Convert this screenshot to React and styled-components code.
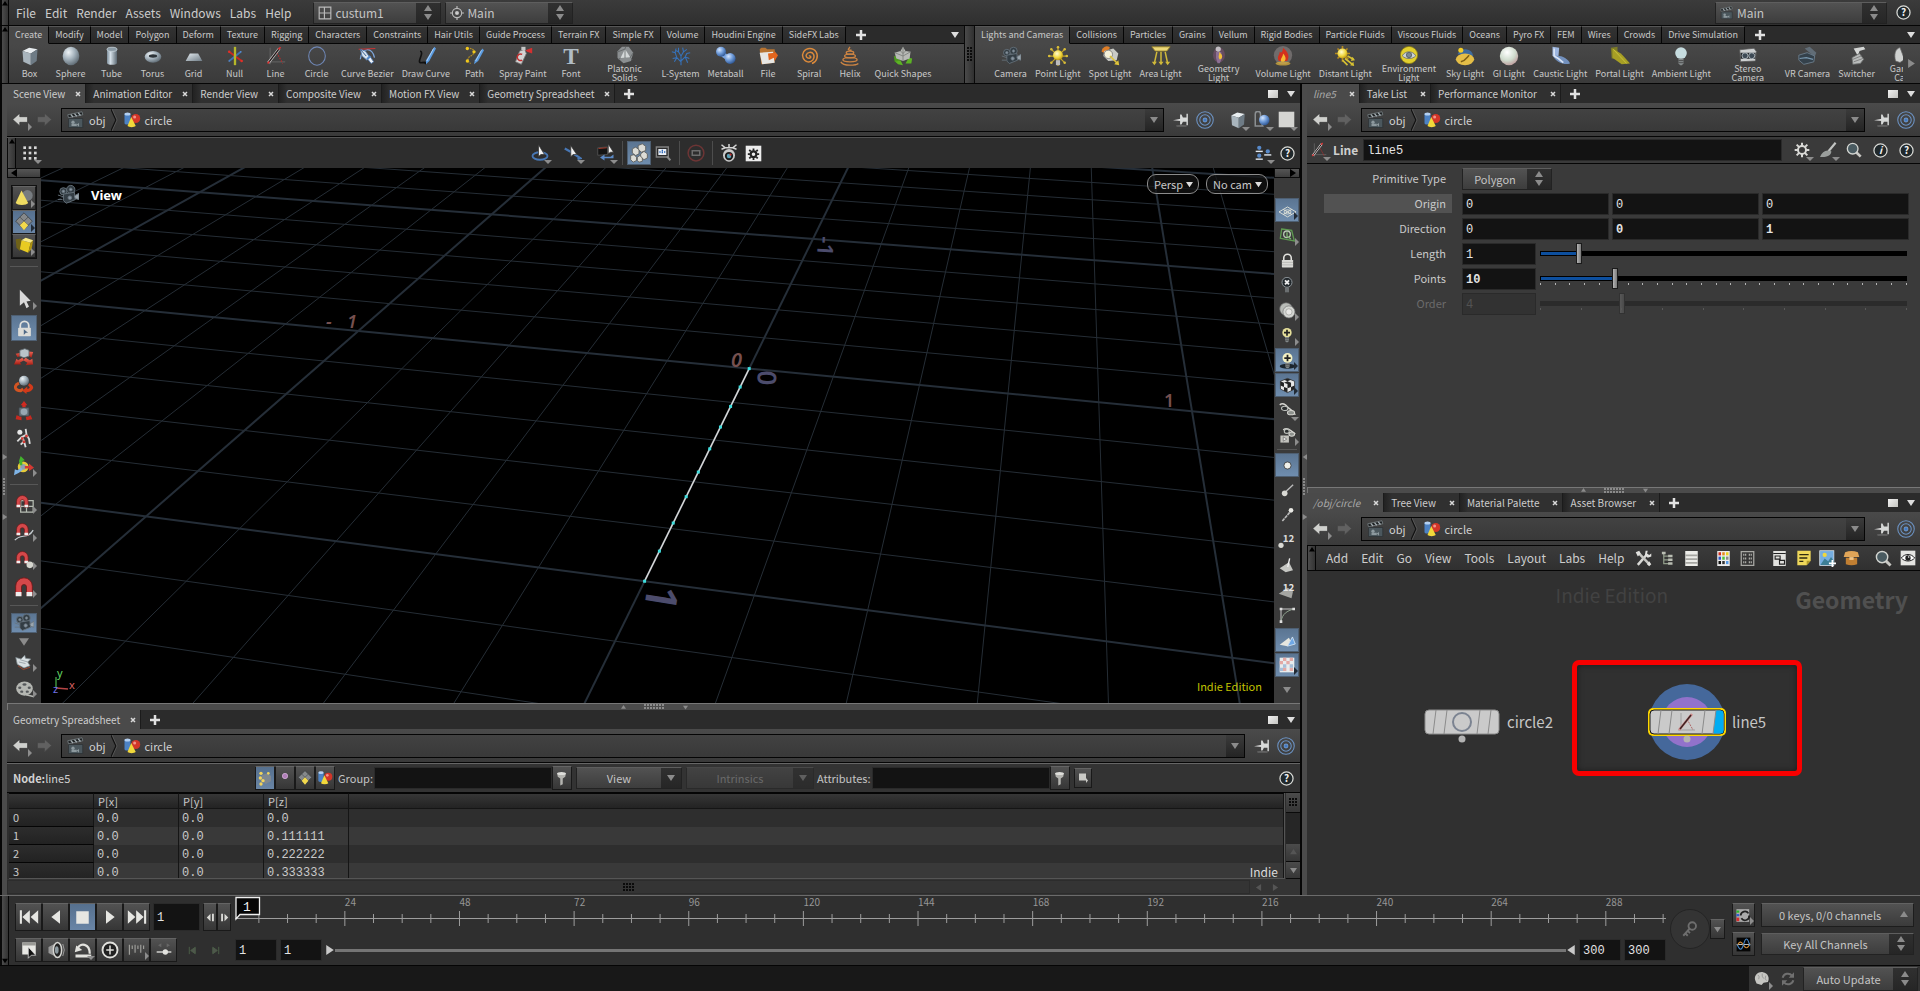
// App.jsx
import React from "react";
import styled, { createGlobalStyle, css } from "styled-components";

const sans = `"Noto Sans CJK SC", "Noto Sans", sans-serif`;
const mono = `"Liberation Mono", "DejaVu Sans Mono", monospace`;

const GlobalStyle = createGlobalStyle`
  * { box-sizing: border-box; }
  body {
    margin: 0;
    background: #181818;
    color: #c4c4c4;
    font-family: ${sans};
    font-size: 11px;
    line-height: 16px;
  }
  button, input, select {
    font: inherit;
    color: inherit;
    margin: 0;
    padding: 0;
    border: none;
    border-radius: 0;
    background: none;
  }
  svg { display: block; flex: none; }
`;

/* ---------- icons ---------- */

const Defs = styled.svg`
  position: absolute;
  width: 0;
  height: 0;
`;

const Gradients = () => (
  <Defs aria-hidden="true">
    <defs>
      <linearGradient id="steel" x1="0" y1="0" x2="1" y2="1">
        <stop offset="0" stopColor="#e4ebf0" />
        <stop offset="1" stopColor="#6f7c86" />
      </linearGradient>
      <linearGradient id="tube" x1="0" x2="1">
        <stop offset="0" stopColor="#7d8e9b" />
        <stop offset="0.35" stopColor="#d5e0e8" />
        <stop offset="1" stopColor="#5b6872" />
      </linearGradient>
      <radialGradient id="ball" cx="0.35" cy="0.3" r="0.75">
        <stop offset="0" stopColor="#eef3f6" />
        <stop offset="0.5" stopColor="#a5b3bd" />
        <stop offset="1" stopColor="#5d6972" />
      </radialGradient>
      <radialGradient id="blue" cx="0.35" cy="0.3" r="0.75">
        <stop offset="0" stopColor="#d5e6ff" />
        <stop offset="0.5" stopColor="#6f9bd8" />
        <stop offset="1" stopColor="#2b5390" />
      </radialGradient>
      <radialGradient id="gold" cx="0.4" cy="0.35" r="0.7">
        <stop offset="0" stopColor="#fffbd0" />
        <stop offset="0.6" stopColor="#efd53a" />
        <stop offset="1" stopColor="#b48c12" />
      </radialGradient>
      <radialGradient id="pearl" cx="0.4" cy="0.3" r="0.8">
        <stop offset="0" stopColor="#ffffff" />
        <stop offset="0.55" stopColor="#cfdccd" />
        <stop offset="1" stopColor="#b98d92" />
      </radialGradient>
      <linearGradient id="red" x1="0" y1="0" x2="0" y2="1">
        <stop offset="0" stopColor="#f06a5a" />
        <stop offset="1" stopColor="#a51c12" />
      </linearGradient>
    </defs>
  </Defs>
);

const magnet = (
  <path d="M3 17 V10 a7 7 0 0 1 14 0 V17 H12.500 V10.500 a2.500 2.500 0 0 0 -5 0 V17Z" fill="#d5484a" stroke="#701616" strokeWidth="0.800" />
);

const bulb = (fill) => (
  <>
    <circle cx="12" cy="8.500" r="7" fill={fill} />
    <path d="M9 15 h6 v6 l-2 2 h-2 l-2-2Z" fill="#83898a" />
    <path d="M9 17.500 h6 M9 20 h6" stroke="#444" />
  </>
);

const padlock = (
  <>
    <path d="M6 12 V8 a6 6 0 0 1 12 0 V12" fill="none" stroke="#e2e2de" strokeWidth="2.500" />
    <rect x="3" y="11" width="18" height="12" rx="1" fill="#dcdcd8" />
  </>
);

const art = {
  box: (
    <>
      <path d="M3 6 L11 2 L21 4 L13 9Z" fill="#e8edf0" />
      <path d="M3 6 L13 9 V23 L4 19Z" fill="#a9b5bd" />
      <path d="M13 9 L21 4 L20 18 L13 23Z" fill="#6e7b85" />
    </>
  ),
  sphere: <ellipse cx="12" cy="12" rx="10" ry="11" fill="url(#ball)" />,
  tube: (
    <>
      <path d="M6 4 V20 a6 2.500 0 0 0 12 0 V4Z" fill="url(#tube)" />
      <ellipse cx="12" cy="4" rx="6" ry="2.500" fill="#8b9aa5" stroke="#c6d2da" />
    </>
  ),
  torus: (
    <>
      <ellipse cx="12" cy="13" rx="10" ry="7" fill="url(#ball)" />
      <ellipse cx="12" cy="12" rx="5" ry="2" fill="#2c3338" />
    </>
  ),
  grid: <path d="M7 9 H17 L22 18 H2Z" fill="url(#steel)" />,
  nullo: (
    <g strokeWidth="2.200">
      <path d="M5 7 L12 12" stroke="#c92822" />
      <path d="M12 12 L20 18" stroke="#c92822" />
      <path d="M19 7 L5 18" stroke="#3d72b5" />
      <path d="M12 1 V23" stroke="#b5b72a" strokeWidth="2.800" />
      <circle cx="5" cy="7" r="1.500" fill="#e03028" />
      <circle cx="20" cy="18" r="1.500" fill="#e03028" />
      <circle cx="19" cy="7" r="1" fill="#5b90d5" />
      <circle cx="5" cy="18" r="1" fill="#5b90d5" />
    </g>
  ),
  line: (
    <>
      <path d="M5 2 V22 M1 19 H23" stroke="#5d5d5d" strokeWidth="1.500" />
      <path d="M13 8 L20 21" stroke="#b52c2c" strokeWidth="1.300" strokeDasharray="2 1.500" />
      <path d="M3 20 L16 3" stroke="#ccc" strokeWidth="3.200" />
      <path d="M3 20 L16 3" stroke="#1f1515" strokeWidth="1.500" />
      <path d="M15 4 l2.500 -2.500 M2 21 l2 -2.500" stroke="#d33" strokeWidth="2" />
    </>
  ),
  circle: <ellipse cx="12" cy="12" rx="10" ry="11" fill="none" stroke="#6e86b4" strokeWidth="1.300" />,
  bezier: (
    <>
      <path d="M4 16 C5 1 19 1 21 14" fill="none" stroke="#7ea7dd" strokeWidth="1.500" />
      <path d="M2 4 L22 3" stroke="#c33" strokeWidth="1.300" />
      <path d="M4 4 L10 6 L15 13 L12 17 L6 12Z" fill="#d9e4ef" stroke="#4b74ab" />
      <path d="M4 4 L11 12" stroke="#3a5f92" strokeWidth="1.200" />
      <path d="M13 16 L17 21 L20 19 L16 13Z" fill="#eef3f8" stroke="#4b74ab" />
      <path d="M12 16 L16 12" stroke="#5588c8" strokeWidth="2.500" />
    </>
  ),
  drawcurve: (
    <>
      <path d="M5 6 C11 8 -1 21 7 20 S9 21 12 21" fill="none" stroke="#101010" strokeWidth="2" />
      <path d="M22 1 L24 3 L16 18 L12 22 L12 17Z" fill="#5a9be0" />
      <path d="M21 3 L13 18" stroke="#b5d5f8" strokeWidth="1.200" />
    </>
  ),
  path: (
    <>
      <path d="M4 3 C15 2 13 10 8 12 S5 20 8 21" fill="none" stroke="#b08c25" strokeWidth="1.500" strokeDasharray="2 1" />
      <path d="M22 3 L24 5 L17 18 L12 22 L13 17Z" fill="#5a9be0" />
      <path d="M21 5 L14 18" stroke="#b5d5f8" />
      <circle cx="4" cy="3" r="2" fill="#f1c81c" />
      <circle cx="12" cy="7" r="2" fill="#f1c81c" />
      <circle cx="4" cy="18" r="2" fill="#f1c81c" />
    </>
  ),
  spray: (
    <>
      <path d="M8 6 L14 4 L16 9 L10 22 L3 19Z" fill="#d3d3d3" stroke="#777" />
      <path d="M10 1 h5 v4 h-5Z" fill="#c5c5c5" />
      <path d="M15 5 L23 2 V9 L17 7Z" fill="#d43030" />
      <path d="M11 10 a4 4 0 1 0 0 7" fill="none" stroke="#c23030" strokeWidth="1.800" />
    </>
  ),
  font: (
    <text x="12" y="21" textAnchor="middle" fontFamily="Liberation Serif" fontWeight="700" fontSize="28" fill="#b0bcc5">T</text>
  ),
  platonic: (
    <>
      <path d="M8 1 H17 L23 9 L20 20 L10 23 L2 16 L2 7Z" fill="#8b8f91" />
      <path d="M12 4 L19 15 L6 16Z" fill="#d4d8d9" />
      <path d="M12 4 L13 1 M19 15 L22 18 M6 16 L3 18 M19 15 L23 9 M12 4 L2 8 M12 4 L12 16" stroke="#5c6062" />
    </>
  ),
  lsystem: (
    <path
      d="M12 23 V11 M12 19 L7 14 L2 15 M7 14 L5 8 L1 7 M5 8 L6 3 M12 12 L9 7 L9 2 M9 7 L5 5 M12 12 L15 7 L14 2 M15 7 L19 4 M12 18 L17 13 L22 15 M17 13 L19 9 L23 8 M7 14 L4 19 M17 13 L20 20"
      fill="none" stroke="#3672ba" strokeWidth="1.300"
    />
  ),
  metaball: (
    <>
      <path d="M8 10 L17 16" stroke="#7ba4de" strokeWidth="6" />
      <circle cx="6" cy="7" r="6" fill="url(#blue)" />
      <circle cx="17" cy="15" r="6.500" fill="url(#blue)" />
    </>
  ),
  file: (
    <>
      <path d="M2 4 L4 2 H9 L11 4 H20 V20 L4 22Z" fill="#b87431" />
      <path d="M2 8 L18 7 L20 20 L5 22Z" fill="#e7e7e4" />
      <path d="M12 9 L20 8 L19 5 L24 11 L20 18 L19 14 L13 17Z" fill="#e2651d" />
    </>
  ),
  spiral: (
    <path
      d="M12 12 a1.500 1.500 0 0 1 2 2 a3.500 3.500 0 0 1 -5.500 -3 a5 5 0 0 1 9 -1 a6.500 6.500 0 0 1 -7 9 a8 8 0 0 1 -5 -12 a9 9 0 0 1 15 0 a9.500 9.500 0 0 1 -5 14"
      fill="none" stroke="#dc8a3b" strokeWidth="1.700"
    />
  ),
  helix: (
    <g fill="none" stroke="#cc8443" strokeWidth="1.600">
      <path d="M12 1 L10 4 a3 1 0 0 0 4 1" />
      <ellipse cx="12" cy="8" rx="4.500" ry="1.800" />
      <ellipse cx="12" cy="12" rx="6.500" ry="2.200" />
      <ellipse cx="12" cy="16.500" rx="8.500" ry="2.500" />
      <path d="M1 19 C4 25 20 23 22 21" />
    </g>
  ),
  quick: (
    <>
      <path d="M1 12 L6 13 L10 22 L2 19Z" fill="#4d9a1e" />
      <path d="M3 19 L9 17 L12 23 L6 22Z M15 21 L19 14 L23 15 L22 21Z" fill="#5cb324" />
      <path d="M12 1 L15 6 L21 7 L20 15 L12 18 L4 15 L2 8 L9 6Z" fill="#b7b9b5" />
      <path d="M12 1 V18 M2 8 L12 12 L21 7 M9 6 L12 9 L15 6" stroke="#7b7d79" fill="none" />
    </>
  ),
  camera: (
    <g fill="#333d44" stroke="#68747d">
      <circle cx="7" cy="8" r="4" />
      <circle cx="15" cy="6" r="4.500" />
      <path d="M7 11 L19 9 L20 17 L10 21 L7 18Z" />
      <path d="M19 13 L24 10 V17 L20 16Z" fill="#9aa5ad" />
      <circle cx="7" cy="8" r="1.500" fill="#8794a0" />
      <circle cx="15" cy="6" r="1.500" fill="#8794a0" />
      <circle cx="14" cy="15" r="2" fill="#8794a0" />
      <path d="M1 12 L7 14 M1 17 h5" />
    </g>
  ),
  point: (
    <>
      <path d="M12 0 V24 M0 12 H24 M3.500 3.500 L20.500 20.500 M20.500 3.500 L3.500 20.500" stroke="#c2a52b" strokeWidth="1.500" />
      <g fill="#d8bc38">
        <circle cx="12" cy="1.500" r="1.500" />
        <circle cx="1.500" cy="12" r="1.500" />
        <circle cx="22.500" cy="12" r="1.500" />
        <circle cx="4" cy="4" r="1.500" />
        <circle cx="20" cy="4" r="1.500" />
        <circle cx="4" cy="20" r="1.500" />
        <circle cx="20" cy="20" r="1.500" />
      </g>
      <circle cx="12" cy="11" r="6" fill="url(#gold)" />
      <path d="M9.500 17 h5 v6 h-5Z" fill="#bbb" />
    </>
  ),
  spot: (
    <>
      <path d="M2 7 a6 6 0 0 1 10 -5 L7 9Z" fill="#dd7d27" />
      <path d="M5 6 L16 3 L22 9 L20 17 L10 18 L4 12Z" fill="#c9cac5" />
      <circle cx="10" cy="10" r="5" fill="#f4f0d8" stroke="#777" />
      <path d="M12 12 L21 21" stroke="#e0c43a" strokeWidth="2" />
      <path d="M23 23 l-6 -1 l5 -5Z" fill="#e0c43a" />
    </>
  ),
  area: (
    <>
      <path d="M1 1 H23 L19 6 H5Z" fill="#ecd878" stroke="#9b8425" />
      <path d="M7 7 L4 21 M12 7 V21 M17 7 L20 21" stroke="#d0b93a" strokeWidth="1.800" />
      <path d="M1 19 h6 l-3 4Z M9 19 h6 l-3 4Z M17 19 h6 l-3 4Z" fill="#d0b93a" />
    </>
  ),
  geolight: (
    <>
      <ellipse cx="12" cy="12" rx="8" ry="10" fill="#6d4d66" opacity="0.800" />
      <circle cx="11" cy="4" r="3.500" fill="#c3bfc4" />
      <path d="M8 8 h7 l1 8 l-3 7 h-3 l-2 -7Z" fill="#8c6f93" />
      <path d="M12 8 C18 12 17 17 13 18 C10 14 13 12 12 8Z" fill="#f0bf38" />
    </>
  ),
  volume: (
    <>
      <circle cx="12" cy="11" r="11" fill="#7a7676" opacity="0.800" />
      <path d="M12 2 C19 8 20 13 17 18 H7 C4 13 8 11 8 7 C10 9 12 7 12 2Z" fill="#d3301d" />
      <path d="M12 9 C16 13 16 17 13 19 H10 C8 15 12 14 12 9Z" fill="#f6b932" />
      <ellipse cx="12" cy="21" rx="9" ry="2.500" fill="#e0b43c" opacity="0.700" />
    </>
  ),
  distant: (
    <>
      <path d="M9 0 V19 M0 9 H18 M3 3 L16 16 M15 3 L3 15" stroke="#b58a1e" strokeWidth="2" />
      <circle cx="9" cy="9" r="6" fill="url(#gold)" />
      <path d="M15 12 L22 16 M12 15 L21 22 M9 17 L15 23" stroke="#d6c032" strokeWidth="2" />
      <path d="M24 17 l-5 1 l2 -5Z M23 24 l-5 -1 l4 -4Z" fill="#d6c032" />
    </>
  ),
  environment: (
    <>
      <circle cx="12" cy="12" r="11.500" fill="#e2cf2f" stroke="#8c7d12" />
      <path d="M3 13 C7 6 17 6 21 13 C17 18 7 18 3 13Z" fill="#c9d0d4" stroke="#5d646a" />
      <circle cx="12" cy="12" r="3.500" fill="#7b8790" stroke="#4a545c" />
    </>
  ),
  sky: (
    <>
      <path d="M3 10 A10 10 0 0 1 22 12Z" fill="#3f6b9d" />
      <circle cx="7" cy="5" r="3" fill="#f2cc28" />
      <ellipse cx="12" cy="16" rx="11" ry="7" fill="#e5be47" />
      <path d="M7 19 C12 18 14 14 17 11" stroke="#7d5e14" strokeWidth="1.800" fill="none" />
    </>
  ),
  gi: <circle cx="12" cy="12" r="11" fill="url(#pearl)" />,
  caustic: (
    <>
      <path d="M3 1 L11 2 L10 14 L3 12Z" fill="#9db6e0" />
      <path d="M4 13 C9 9 22 14 24 21 C18 23 9 21 4 13Z" fill="#7290bd" />
      <path d="M5 3 V12 L10 15 L16 20" stroke="#d9e4f5" strokeWidth="2" fill="none" />
    </>
  ),
  portal: (
    <>
      <path d="M1 2 L9 1 V16 L2 15Z" fill="#7c7b26" />
      <path d="M3 3 L13 9 L16 12 L24 21 L14 22 L3 14Z" fill="#a79f25" />
      <path d="M4 4 L20 21" stroke="#cfc63d" />
    </>
  ),
  ambient: bulb("#c6dcdf"),
  stereo: (
    <>
      <path d="M1 5 L20 3 L23 7 L22 20 L2 21Z" fill="#cdd0d1" stroke="#555" />
      <path d="M2 9 H22 V17 H2Z" fill="#24292c" />
      <circle cx="8" cy="13" r="4" fill="#3d4a55" stroke="#c8d0d6" />
      <circle cx="17" cy="13" r="4" fill="#3d4a55" stroke="#c8d0d6" />
    </>
  ),
  vr: (
    <>
      <path d="M8 3 L14 1 L22 8 L20 13 L14 8Z" fill="#616d77" />
      <path d="M1 11 L11 8 L20 12 L19 19 L7 22 L1 17Z" fill="#34414b" stroke="#6f8292" />
      <path d="M2 15 L10 14 L18 16" stroke="#7897ae" strokeWidth="1.500" fill="none" />
    </>
  ),
  switcher: (
    <>
      <path d="M8 3 L20 1 L22 4 L15 6 L13 12Z" fill="#d5d7d6" />
      <path d="M6 14 L15 9 L20 16 L16 21 L7 22Z" fill="#b9bcbb" stroke="#6c6f6e" />
      <path d="M7 16 L17 12 M8 19 L19 15" stroke="#777" />
    </>
  ),
  gamecam: (
    <path d="M12 2 C5 4 4 12 6 20 L12 22 L18 18Z" fill="#cfd1d0" stroke="#666" />
  ),
  layout: (
    <path d="M2 2 H22 V22 H2Z M11 2 V22 M2 12 H22" fill="none" stroke="#b9b9b9" strokeWidth="2" />
  ),
  target: (
    <g fill="none" stroke="#b9b9b9" strokeWidth="2">
      <circle cx="12" cy="12" r="8" />
      <circle cx="12" cy="12" r="2.500" fill="#ddd" />
      <path d="M12 0 V5 M12 19 V24 M0 12 H5 M19 12 H24" />
    </g>
  ),
  clapper: (
    <>
      <path d="M2 10 H21 V22 H2Z" fill="#4b575d" stroke="#2c3134" />
      <path d="M1 5 L20 1 L21 5 L2 9Z" fill="#1d2022" stroke="#7d868a" />
      <path d="M5 4.500 L8 8 M10 3.500 L13 7 M15 2.500 L18 6" stroke="#a3adb1" strokeWidth="1.800" />
      <circle cx="8" cy="15" r="2.200" fill="#8d999e" />
      <path d="M6 17 H13 V20 H6Z M13 18 L16 16 V21Z" fill="#8d999e" />
    </>
  ),
  shapes: (
    <>
      <path d="M2 4 V16 a4 2 0 0 0 8 0 V4Z" fill="#4c82c4" />
      <ellipse cx="6" cy="4" rx="4" ry="2" fill="#b3d0f2" />
      <circle cx="17" cy="10" r="6" fill="#d23528" />
      <circle cx="15.500" cy="8" r="2" fill="#f29488" />
      <path d="M11 8 L17 20 a6 2.500 0 0 1 -11 0Z" fill="#f1d83b" />
    </>
  ),
  back: (
    <path d="M1 12 L11 3 V8 H22 V16 H11 V21Z" fill="#cfd0cd" stroke="#333" />
  ),
  forward: (
    <path d="M22 12 L12 3 V8 H2 V16 H12 V21Z" fill="#616161" stroke="#444" />
  ),
  pin: (
    <>
      <path d="M0 13 L11 11 V14Z" fill="#ddd" />
      <path d="M10 5 H12 L14 9 H19 V4 H21 V20 H19 V15 H14 L12 19 H10Z" fill="#d7d9d8" />
      <ellipse cx="12" cy="21" rx="8" ry="1.200" fill="#666" />
    </>
  ),
  rings: (
    <g fill="none" stroke="#6c93c4" strokeWidth="1.400">
      <circle cx="12" cy="12" r="11" />
      <circle cx="12" cy="12" r="7" />
      <circle cx="12" cy="12" r="2.500" fill="#3f7ac8" />
    </g>
  ),
  ghost: (
    <>
      <path d="M3 4 a3 3 0 0 1 7 0 V12 L13 20 H3Z" fill="none" stroke="#8b8f92" strokeWidth="2" />
      <circle cx="15" cy="12" r="7" fill="url(#blue)" />
    </>
  ),
  white: <path d="M1 1 H23 V23 H1Z" fill="#d5d5d2" />,
  dots: (
    <g fill="#d6d6d6">
      {[2, 10, 18].map((y) => [2, 10, 18].map((x) => <rect key={`${x}${y}`} x={x} y={y} width="4" height="4" />))}
    </g>
  ),
  selRotate: (
    <>
      <ellipse cx="12" cy="16" rx="10" ry="5" fill="none" stroke="#4877b4" strokeWidth="2.500" />
      <path d="M10 1 L10 17 L13 14 L18 14Z" fill="#f1f1f1" stroke="#333" />
    </>
  ),
  selBrush: (
    <>
      <path d="M1 6 L10 11 L22 19 L18 20" stroke="#4877b4" strokeWidth="3" fill="none" />
      <path d="M9 2 L9 17 L12 14 L17 14Z" fill="#f1f1f1" stroke="#333" />
    </>
  ),
  selMove: (
    <>
      <path d="M1 5 L14 4 V14 L1 15Z" fill="#141414" stroke="#5b5b5b" />
      <path d="M2 6 L13 5" stroke="#a03a2a" strokeWidth="1.500" />
      <path d="M22 14 V19 H10 V22 L4 18 L10 14 V17 H18Z" fill="#5c8ac6" />
      <path d="M15 0 L15 13 L18 11 L22 11Z" fill="#f1f1f1" stroke="#333" />
    </>
  ),
  cubes: (
    <g fill="#dcdcd6" stroke="#5c5c58">
      <path d="M11 3 L16 1 L20 4 V9 L15 11 L11 8Z" />
      <path d="M4 7 L8 5 L12 8 V13 L8 15 L4 12Z" />
      <path d="M14 13 L18 10 L22 13 V18 L18 20 L14 17Z" />
      <path d="M2 15 L6 14 L9 17 V21 L5 23 L2 20Z" />
      <path d="M10 17 L13 15 L16 18 V22 L12 23 L10 21Z" />
    </g>
  ),
  zoombox: (
    <>
      <path d="M2 3 H20 V18 H2Z" fill="none" stroke="#808080" strokeWidth="2" />
      <rect x="5" y="6" width="12" height="9" fill="#e9eef5" />
      <path d="M11 7 v7 M6.500 10.500 h9" stroke="#2d66b5" strokeWidth="2" strokeDasharray="2 1.500" />
      <path d="M18 17 L23 23" stroke="#8b8b8b" strokeWidth="3" />
    </>
  ),
  noentry: (
    <>
      <circle cx="12" cy="12" r="10.500" fill="none" stroke="#6d3535" strokeWidth="2" />
      <rect x="7" y="9" width="10" height="6" fill="none" stroke="#6d6d6d" strokeWidth="2" />
    </>
  ),
  flycam: (
    <>
      <path d="M2 1 L7 5 H17 L22 1 M2 7 L7 5 M22 7 L17 5 M12 0 V6" stroke="#d5d5d5" strokeWidth="2" fill="none" />
      <ellipse cx="12" cy="15" rx="8" ry="8.500" fill="#c9c9c9" />
      <circle cx="12" cy="16" r="5.500" fill="#1b1b1b" />
      <circle cx="12" cy="16" r="3" fill="#5ba3b8" />
      <circle cx="14" cy="14" r="1.500" fill="#c33" />
    </>
  ),
  gearbox: (
    <>
      <rect x="1" y="1" width="22" height="22" fill="#ececec" />
      <circle cx="12" cy="13" r="4" fill="none" stroke="#222" strokeWidth="3" />
      <path d="M12 5 V8 M12 18 V21 M4 13 H7 M17 13 H20 M6 7 L8 9 M16 17 L18 19 M18 7 L16 9 M8 17 L6 19" stroke="#222" strokeWidth="2.500" />
    </>
  ),
  people: (
    <g>
      {[[6, 4], [6, 15], [18, 9]].map(([x, y]) => (
        <g key={`${x}${y}`}>
          <circle cx={x} cy={y} r="3" fill="#5789c9" />
          <path d={`M${x - 5} ${y + 5} h10`} stroke="#dfe6ee" strokeWidth="2" />
        </g>
      ))}
    </g>
  ),
  help: (
    <>
      <circle cx="12" cy="12" r="10.500" fill="#20282b" stroke="#d9dad6" strokeWidth="2" />
      <text x="12" y="18" textAnchor="middle" fontSize="16" fontWeight="700" fill="#f1f1f1">?</text>
    </>
  ),
  info: (
    <>
      <circle cx="12" cy="12" r="10.500" fill="#20282b" stroke="#d9dad6" strokeWidth="2" />
      <text x="12" y="18" textAnchor="middle" fontSize="16" fontStyle="italic" fontWeight="700" fill="#f1f1f1">i</text>
    </>
  ),
  cone: (
    <>
      <circle cx="16" cy="9" r="6.500" fill="#777c80" />
      <path d="M9 3 L17 18 a8 3.500 0 0 1 -15 0Z" fill="#efdc62" />
    </>
  ),
  diamond: (
    <>
      <path d="M12 1 L22 11 L12 21 L2 11Z" fill="#85888a" stroke="#3c4145" />
      <path d="M7 6 L17 16 M17 6 L7 16" stroke="#4a4f53" />
      <path d="M12 11 L17 16 L12 22 L7 16Z" fill="#f2d94c" />
    </>
  ),
  yellowcube: (
    <>
      <path d="M2 4 L9 3 L7 18 L3 14Z" fill="#6f6218" />
      <path d="M9 5 L20 8 L17 20 L7 16Z" fill="#e8cb22" />
      <path d="M9 5 L14 2 L23 5 L20 8Z" fill="#f8ea86" />
      <path d="M20 8 L23 5 L21 16 L17 20Z" fill="#ad920f" />
    </>
  ),
  arrow: <path d="M7 1 L7 20 L12 16 L15 23 L18 21 L15 15 L20 14Z" fill="#dadada" />,
  lock: (
    <>
      {padlock}
      <path d="M11 13 V21 L14 18 H17Z" fill="#4e6886" />
    </>
  ),
  padlock: (
    <>
      {padlock}
      <path d="M3 15 H21 M3 19 H21" stroke="#a9a9a5" />
    </>
  ),
  move: (
    <>
      <path d="M0 21 L3 14 L5 16 L10 13 L12 16 L7 19 L9 21Z" fill="url(#red)" />
      <path d="M23 21 L14 22 L16 19 L11 16 L14 13 L19 16 L22 14Z" fill="url(#red)" />
      <path d="M15 5 L23 6 L21 13 L17 10Z M8 7 L2 8 L4 12 L8 11Z" fill="url(#red)" />
      <path d="M7 4 L13 2 L18 4 V11 L12 13 L7 11Z" fill="#b9c4ca" stroke="#60696e" />
    </>
  ),
  rotate: (
    <>
      <path d="M6 11 C-1 14 1 20 8 20 L11 18" fill="none" stroke="#d35422" strokeWidth="3.500" />
      <path d="M18 11 C26 14 24 21 15 22 L15 24 L10 20 L16 15 V18 C19 17 20 16 17 14Z" fill="#d23a1a" />
      <circle cx="12" cy="8" r="6" fill="url(#ball)" />
    </>
  ),
  scale: (
    <>
      <path d="M12 0 L16 5 H8Z M10 5 h4 v4 h-4Z" fill="#d02a20" />
      <path d="M2 22 L3 17 L9 19 V23Z M22 22 L20 17 L14 19 L15 23Z" fill="#c62a20" />
      <path d="M6 8 L18 8 V18 H6Z" fill="#67737b" stroke="#3e464b" />
      <circle cx="12" cy="13" r="4" fill="#97a7b2" />
    </>
  ),
  pose: (
    <>
      <circle cx="7" cy="5" r="3" fill="#e6e6e6" />
      <path d="M14 1 L15 8 L9 11 L4 16 M15 8 L18 13 L19 19 M10 11 L12 16 L14 23 M12 16 L8 20" stroke="#d9d9d9" strokeWidth="2.200" fill="none" />
      <path d="M15 8 v3 M10 11 v3 M12 15 v3" stroke="#d43a33" strokeWidth="3" />
    </>
  ),
  handles: (
    <>
      <circle cx="11" cy="13" r="5" fill="#8fa0b4" stroke="#e6cb39" strokeWidth="3" />
      <path d="M8 0 L13 5 L10 6 V11 H7 L6 6Z" fill="#43b32d" />
      <path d="M13 12 H18 V9 L24 14 L18 18 V15 H13Z" fill="#d43a33" />
      <path d="M0 23 L1 16 L4 17 L9 14 L10 17 L6 20Z" fill="#7fb4e6" />
    </>
  ),
  magnetGrid: (
    <>
      <path d="M8 9 H23 V23 H8Z M15 9 V23 M8 16 H23" fill="none" stroke="#b6bcb2" strokeWidth="1.500" />
      {magnet}
      <path d="M3 14 h4.500 v3 H3Z M12.500 14 h4.500 v3 h-4.500Z" fill="#eee" />
    </>
  ),
  magnetCurve: (
    <>
      <path d="M1 23 C8 15 17 22 23 11" fill="none" stroke="#c5ccd0" strokeWidth="1.500" />
      {magnet}
      <path d="M3 14 h4.500 v3 H3Z M12.500 14 h4.500 v3 h-4.500Z" fill="#eee" />
    </>
  ),
  magnetPoint: (
    <>
      {magnet}
      <path d="M3 14 h4.500 v3 H3Z M12.500 14 h4.500 v3 h-4.500Z" fill="#eee" />
      <circle cx="19" cy="19" r="4" fill="#d5d5ce" />
    </>
  ),
  magnet: (
    <>
      <path d="M2 22 V11 a10 10 0 0 1 20 0 V22 H15 V12 a3 3 0 0 0 -6 0 V22Z" fill="#d5484a" stroke="#701616" />
      <path d="M2 18 h7 v5 H2Z M15 18 h7 v5 h-7Z" fill="#eee" />
    </>
  ),
  flip: (
    <>
      <path d="M1 6 L8 8 L13 3 L14 7 L21 8 L17 12 L20 17 L12 20 L3 15Z" fill="#d8dfe2" stroke="#7b858a" />
      <path d="M5 12 L14 14 M7 9 L17 12" stroke="#8d979c" />
      <path d="M4 17 L11 22 L20 19" stroke="#b54a2c" fill="none" />
    </>
  ),
  reel: (
    <>
      <ellipse cx="12" cy="12" rx="10.500" ry="9" fill="#b5b7b2" />
      <path d="M14 20 L23 22" stroke="#b5b7b2" strokeWidth="2" />
      <g fill="#55585a">
        <ellipse cx="12" cy="7" rx="2.500" ry="1.500" />
        <ellipse cx="6" cy="11" rx="2" ry="1.500" />
        <ellipse cx="18" cy="11" rx="2" ry="1.500" />
        <ellipse cx="8.500" cy="16" rx="2" ry="1.500" />
        <ellipse cx="15.500" cy="16" rx="2" ry="1.500" />
      </g>
    </>
  ),
  plane: (
    <g fill="none" stroke="#e2e4da" strokeWidth="1.300">
      <path d="M0 14 L12 7 L24 14 L12 21Z" />
      <ellipse cx="12" cy="14" rx="5" ry="3" />
      <path d="M6 10.500 L18 17.500 M18 10.500 L6 17.500" />
    </g>
  ),
  greenplane: (
    <>
      <path d="M4 3 L19 5 L23 21 L2 17Z" fill="none" stroke="#5e9a51" strokeWidth="2" />
      <circle cx="12" cy="11" r="5" fill="none" stroke="#b9c8b5" strokeWidth="2" />
      <path d="M12 8 V14 L18 18" stroke="#7fb573" strokeWidth="2" fill="none" />
    </>
  ),
  bulbOff: (
    <>
      <circle cx="12" cy="8" r="7.500" fill="#22282c" stroke="#8b9297" strokeWidth="1.500" />
      <path d="M9 5 L15 11 M15 5 L9 11" stroke="#eee" strokeWidth="2.800" />
      <path d="M9 16 h6 v7 h-6Z" fill="#6b6f71" />
    </>
  ),
  discs: (
    <>
      <circle cx="10" cy="10" r="9" fill="#b9bcb8" stroke="#666" />
      <circle cx="14" cy="14" r="8.500" fill="#d4d6d2" stroke="#777" />
      <circle cx="14" cy="14" r="4.500" fill="#e8e8e5" stroke="#9a9a97" />
    </>
  ),
  bulbAdd: (
    <>
      {bulb("#e5df9a")}
      <path d="M12 4 V13 M7.500 8.500 H16.500" stroke="#222" strokeWidth="2.500" />
    </>
  ),
  bulbShadow: (
    <>
      <ellipse cx="12" cy="20" rx="11" ry="3.500" fill="#1b242c" />
      {bulb("#f5f2c4")}
      <path d="M12 4 V13 M7.500 8.500 H16.500" stroke="#222" strokeWidth="2.500" />
    </>
  ),
  checker: (
    <>
      <path d="M12 2 L22 6 V17 L12 22 L2 17 V6Z" fill="#e8e8e8" stroke="#222" />
      <path d="M7 4 L12 6 L17 4 L12 2Z M2 6 L7 8 V14 L2 12Z M12 10 L17 8 V14 L12 16Z M7 14 L12 16 V22 L7 19.500Z M17 14 L22 12 V17 L17 19.500Z M7 8 L12 6 L17 8 L12 10Z" fill="#222" />
    </>
  ),
  glasses: (
    <>
      <path d="M1 4 C5 1 9 3 12 7 S20 11 23 18" stroke="#d5d5d0" strokeWidth="2" fill="none" />
      <ellipse cx="8" cy="9" rx="4.500" ry="3" fill="#2b2e2f" stroke="#bcbfbb" strokeWidth="1.500" />
      <ellipse cx="17" cy="15" rx="5" ry="3" fill="#8d918d" stroke="#d5d5d0" strokeWidth="1.500" />
    </>
  ),
  glassesPlay: (
    <>
      <path d="M6 4 C11 0 15 3 23 10" stroke="#d5d5d0" strokeWidth="2" fill="none" />
      <ellipse cx="11" cy="6" rx="3.500" ry="3" fill="#2b2e2f" stroke="#bcbfbb" strokeWidth="1.500" />
      <ellipse cx="18" cy="10" rx="4" ry="3" fill="#8d918d" stroke="#d5d5d0" strokeWidth="1.500" />
      <rect x="2" y="12" width="12" height="10" fill="#c2c2bd" />
      <path d="M6 14 L11 17 L6 20Z" fill="#f1f1f1" stroke="#666" />
    </>
  ),
  dot: <circle cx="12" cy="12" r="4.500" fill="#f0f0ea" stroke="#333" />,
  dotNormal: (
    <>
      <path d="M9 14 L20 4" stroke="#bbb" strokeWidth="2" />
      <circle cx="8" cy="16" r="4" fill="#d9d9d4" />
    </>
  ),
  dotDrag: (
    <>
      <path d="M5 21 L17 7" stroke="#bbb" strokeWidth="2.500" strokeDasharray="5 1" />
      <circle cx="18" cy="5" r="3.500" fill="#e9e9e4" />
    </>
  ),
  pointNum: (
    <>
      <circle cx="4" cy="19" r="3.500" fill="#d9d9d4" />
      <text x="14" y="15" textAnchor="middle" fontSize="13" fontWeight="700" fill="#dcdcdc">12</text>
    </>
  ),
  primNormal: (
    <>
      <path d="M1 17 L15 8 L21 20 L10 23Z" fill="#c5c6c2" />
      <path d="M13 15 L16 2" stroke="#eee" strokeWidth="2" />
    </>
  ),
  primNum: (
    <>
      <path d="M1 17 L13 9 L20 14 L18 23Z" fill="#a5a6a2" />
      <text x="14" y="13" textAnchor="middle" fontSize="13" fontWeight="700" fill="#e4e4e4">12</text>
    </>
  ),
  curveHull: (
    <>
      <path d="M3 22 V3 H22" fill="none" stroke="#c9c9c9" strokeWidth="1.500" />
      <path d="M3 22 C5 10 12 6 22 3" fill="none" stroke="#8fa28f" strokeWidth="1.500" />
      <path d="M1 1 h4 v4 H1Z M20 1 h4 v4 h-4Z M1 20 h4 v4 H1Z" fill="#ddd" />
    </>
  ),
  prims: (
    <>
      <path d="M1 18 L14 8 L16 12 L12 20Z" fill="#e6e6df" />
      <path d="M12 20 L19 7 L23 17Z" fill="#6fa8e6" stroke="#e9f2fb" />
    </>
  ),
  texture: (
    <>
      <rect x="1" y="1" width="22" height="22" fill="#e8ecee" />
      <path d="M1 6 h5 v5 H1Z M11 6 h5 v5 h-5Z M6 16 h5 v5 H6Z M16 1 h5 v5 h-5Z M16 16 h5 v5 h-5Z M6 1 h5 v5 H6Z" fill="#e3a9a5" />
      <path d="M6 11 h5 v5 H6Z M16 11 h5 v5 h-5Z M1 16 h5 v5 H1Z" fill="#a7bfd8" />
    </>
  ),
  gear: (
    <>
      <path d="M12 1 V23 M1 12 H23 M4 4 L20 20 M20 4 L4 20" stroke="#d9d9d6" strokeWidth="3" />
      <circle cx="12" cy="12" r="6" fill="none" stroke="#d9d9d6" strokeWidth="3" />
      <circle cx="12" cy="12" r="4.500" fill="#3a3a3a" />
    </>
  ),
  brush: (
    <>
      <path d="M12 13 L22 1" stroke="#c2c4c2" strokeWidth="3" />
      <path d="M0 21 C3 13 9 10 16 13 C16 20 7 22 0 21Z" fill="#9a9e9c" />
    </>
  ),
  search: (
    <>
      <path d="M15 15 L22 22" stroke="#c9c9c5" strokeWidth="4" />
      <circle cx="10" cy="10" r="8" fill="#4a5b61" stroke="#d3d5d1" strokeWidth="2" />
    </>
  ),
  wrench: (
    <>
      <path d="M4 21 L17 6" stroke="#d9d9d6" strokeWidth="3.500" />
      <path d="M5 4 L20 20" stroke="#c6c6c2" strokeWidth="3.500" />
      <path d="M15 1 L18 1 L17 5 L20 7 L23 5 V9 L18 11 L14 7Z M1 3 L6 1 L8 5 L4 9Z M17 20 L20 16 L23 20 L20 23Z" fill="#e1e1de" />
    </>
  ),
  tree: (
    <>
      <path d="M6 3 V21 M6 8 H14 M6 14 H14 M6 20 H14" stroke="#8f9a88" strokeWidth="2" fill="none" />
      <path d="M3 1 h6 v4 H3Z M13 6 h7 v4 h-7Z M13 12 h7 v4 h-7Z M13 18 h7 v4 h-7Z" fill="#b9bdb2" />
    </>
  ),
  list: (
    <>
      <rect x="2" y="0" width="20" height="24" fill="#ecece8" />
      <path d="M2 7 H22 M2 13 H22 M2 19 H22" stroke="#a6a6a2" strokeWidth="3" />
    </>
  ),
  palette: (
    <>
      <rect x="2" y="0" width="20" height="24" fill="#ececec" />
      {["#d32f1f", "#e68a1c", "#f0d21c", "#2f55c4", "#52c234", "#8a8a8a", "#111", "#333", "#5599e6"].map((c, i) => (
        <rect key={c} x={4 + (i % 3) * 6} y={2 + Math.floor(i / 3) * 7} width="4" height="5" fill={c} />
      ))}
    </>
  ),
  params: (
    <>
      <rect x="2" y="1" width="20" height="22" fill="none" stroke="#a9a9a5" strokeWidth="2" />
      <path d="M5 6 h5 M14 6 h5 M5 12 h5 M14 12 h5 M5 18 h5 M14 18 h5" stroke="#a9a9a5" strokeWidth="3" strokeDasharray="2 1" />
    </>
  ),
  netbox: (
    <>
      <rect x="2" y="0" width="20" height="24" fill="#e2e2df" />
      <path d="M5 8 h8 v5 H5Z M12 15 h8 v6 h-8Z M2 4 H22" fill="none" stroke="#222" strokeWidth="1.800" />
    </>
  ),
  note: (
    <>
      <path d="M2 1 H22 V16 L16 23 H2Z" fill="#eed75a" />
      <path d="M5 7 H19 M5 12 H17 M5 17 H11" stroke="#2e2a10" strokeWidth="2" />
      <path d="M16 23 V16 H22Z" fill="#b19a28" />
    </>
  ),
  image: (
    <>
      <rect x="1" y="1" width="20" height="21" fill="#76aee0" stroke="#dfe6ea" />
      <circle cx="8" cy="7" r="3" fill="#f1d83b" />
      <path d="M2 21 L8 12 L13 16 L17 10 L21 16 V21Z" fill="#3d7f96" />
      <path d="M19 14 V24 M14 19 H24" stroke="#fff" strokeWidth="2.500" />
    </>
  ),
  crate: (
    <>
      <path d="M3 3 Q12 0 21 3 L23 10 H1Z" fill="#e0a558" />
      <path d="M4 11 H20 V20 Q12 23 4 20Z" fill="#c17f32" />
      <path d="M9 10 H15 V14 H9Z" fill="#f0c588" />
    </>
  ),
  eye: (
    <>
      <rect x="1" y="1" width="22" height="22" fill="#e5e5e2" />
      <path d="M2 12 C7 5 17 5 22 12 C17 18 7 18 2 12Z" fill="#fff" stroke="#222" strokeWidth="1.500" />
      <circle cx="12" cy="12" r="4" fill="#222" />
      <circle cx="13" cy="10.500" r="1.200" fill="#fff" />
    </>
  ),
  points: (
    <>
      <path d="M7 8 L15 5 L21 9 V17 L13 21 L7 16Z" fill="#7f8890" />
      <g fill="#f2d35c">
        <circle cx="6" cy="5" r="2.500" />
        <circle cx="5" cy="12" r="2.500" />
        <circle cx="9" cy="16" r="2.500" />
        <circle cx="6" cy="21" r="2.500" />
        <circle cx="17" cy="5" r="2" />
      </g>
    </>
  ),
  vertex: <circle cx="12" cy="9" r="4" fill="#b07fb8" stroke="#dbb7e0" />,
  funnel: (
    <>
      <path d="M5 3 H19 L18 9 L14 12 V21 L10 23 V12 L6 9Z" fill="#b4b4b0" />
      <ellipse cx="12" cy="4" rx="7" ry="2.500" fill="#dededa" />
    </>
  ),
  pageArrow: (
    <path d="M4 3 H18 V12 L22 17 L18 22 V17 H4Z" fill="#c9c9c5" />
  ),
  first: <path d="M1 4 H3.500 V20 H1Z M13 4 V20 L4 12Z M23 4 V20 L14 12Z" fill="#e6e6e2" />,
  prev: <path d="M18 2 V22 L5 12Z" fill="#e6e6e2" />,
  stop: <path d="M2 2 H22 V22 H2Z" fill="#e6e6e2" />,
  play: <path d="M6 2 V22 L19 12Z" fill="#e6e6e2" />,
  last: <path d="M23 4 H20.500 V20 H23Z M11 4 V20 L20 12Z M1 4 V20 L10 12Z" fill="#e6e6e2" />,
  stepBack: <path d="M12 2 V22 L2 12Z M16 2 h5 v20 h-5Z" fill="#d9d9d5" />,
  stepFwd: <path d="M12 2 V22 L22 12Z M3 2 h5 v20 H3Z" fill="#d9d9d5" />,
  windowArrow: (
    <>
      <rect x="3" y="2" width="18" height="16" fill="#e8e8e4" />
      <rect x="3" y="2" width="18" height="4" fill="#9a9a96" />
      <path d="M11 8 V23 L15 19 H21Z" fill="#111" stroke="#ddd" />
    </>
  ),
  speaker: (
    <>
      <path d="M2 8 L10 4 V20 L2 16Z" fill="#999" />
      <ellipse cx="14" cy="12" rx="5.500" ry="10" fill="#222" stroke="#d6d6d2" strokeWidth="2" />
      <ellipse cx="13" cy="12" rx="2.500" ry="5" fill="#8d9aa0" />
      <path d="M21 4 Q25 12 21 20" stroke="#bbb" fill="none" />
    </>
  ),
  loop: (
    <>
      <path d="M5 10 C8 2 21 3 21 17" fill="none" stroke="#e2e2de" strokeWidth="3" />
      <path d="M1 15 L3 6 L11 12Z M2 18 H23 V22 H2Z" fill="#e2e2de" />
    </>
  ),
  clock: (
    <>
      <circle cx="12" cy="12" r="10" fill="#222" stroke="#e2e2de" strokeWidth="2.500" />
      <path d="M12 6 V18 M7 12 H17" stroke="#e2e2de" strokeWidth="2" />
    </>
  ),
  bars: <path d="M2 4 V18 M6 5 V10 M10 4 V15 M14 5 V10 M18 4 V15 M22 5 V10" stroke="#9d9d99" strokeWidth="1.700" />,
  keyline: (
    <>
      <path d="M1 15 H23" stroke="#e2e2de" strokeWidth="2" />
      <circle cx="14" cy="15" r="4" fill="#e2e2de" />
      <path d="M8 2 L3 5 L8 8Z M16 2 L21 5 L16 8Z" fill="#666" />
    </>
  ),
  keyPrev: <path d="M5 4 V20 M18 5 V19 L8 12Z" fill="#50564d" stroke="#4b5f47" strokeWidth="2" />,
  keyNext: <path d="M19 4 V20 M6 5 V19 L16 12Z" fill="#50564d" stroke="#4b5f47" strokeWidth="2" />,
  key: (
    <g fill="none" stroke="#6e6e6e" strokeWidth="2.500">
      <circle cx="15" cy="8" r="5" />
      <path d="M12 11 L3 21 M6 18 L9 21 M9 14.500 L12 17.500" />
    </g>
  ),
  scopes: (
    <>
      <rect x="2" y="3" width="18" height="18" fill="#aaa" />
      <path d="M2 5 h4 v3 H2Z" fill="#27b827" />
      <path d="M2 10 h4 v3 H2Z" fill="#2a5bd0" />
      <path d="M2 15 h4 v5 H2Z" fill="#d42c2c" />
      <path d="M8 12 a6 6 0 0 1 11 -3 M20 12 a6 6 0 0 1 -11 4" fill="none" stroke="#222" strokeWidth="2.500" />
    </>
  ),
  waves: (
    <>
      <rect x="1" y="1" width="22" height="22" fill="#050505" />
      <path d="M1 12 H23" stroke="#ccc" strokeWidth="1.500" />
      <path d="M2 14 C6 5 9 8 12 13 S19 20 22 10" fill="none" stroke="#c98836" strokeWidth="1.800" />
      <path d="M2 12 C6 22 9 22 12 12 S18 -2 22 14" fill="none" stroke="#4a8acb" strokeWidth="1.800" />
    </>
  ),
  brain: (
    <>
      <path d="M3 14 C1 7 8 2 14 3 C21 4 24 11 21 17 L15 18 L12 21 L5 19Z" fill="#c6c6c2" />
      <path d="M7 7 Q10 9 8 13 M13 5 Q12 9 15 12 M18 8 Q16 13 19 15" stroke="#888" fill="none" />
    </>
  ),
  refresh: (
    <>
      <path d="M4 10 A8 8 0 0 1 18 7 M20 14 A8 8 0 0 1 6 17" fill="none" stroke="#707070" strokeWidth="3" />
      <path d="M21 2 V10 H13Z M3 22 V14 H11Z" fill="#707070" />
    </>
  ),
};

const Icon = ({ name, size = 20 }) => (
  <svg width={size} height={size} viewBox="0 0 24 24" aria-hidden="true">
    {art[name]}
  </svg>
);

const tri = {
  up: "M0 6 L4 0 L8 6Z",
  down: "M0 1 L4 7 L8 1Z",
  left: "M7 0 L1 4 L7 8Z",
  right: "M1 0 L7 4 L1 8Z",
};

const Triangle = ({ dir, color = "#8b8b8b", size = 8 }) => (
  <svg width={size} height={size} viewBox="0 0 8 8" aria-hidden="true">
    <path d={tri[dir]} fill={color} />
  </svg>
);

/* ---------- shared parts ---------- */

const Page = styled.div`
  min-height: 100vh;
  display: grid;
  grid-template-rows: 26px 58px minmax(0, 1fr) 71px 25px;
  background: #2e2e2e;
  overflow: hidden;
`;

const Handle = styled.div`
  width: 9px;
  flex: none;
  display: flex;
  justify-content: center;
  align-items: ${(p) => (p.$end ? "flex-end" : "flex-start")};
  padding: 1px 0;
  background: linear-gradient(90deg, #4c4c4c, #333);
  border-left: 2px solid #0a0a0a;
  border-right: 1px solid #050505;
`;

const Spacer = styled.div`
  flex: ${(p) => (p.$w ? `0 0 ${p.$w}px` : 1)};
`;

const ToolButton = styled.button`
  position: relative;
  display: flex;
  flex: none;
  align-items: center;
  justify-content: center;
  width: ${(p) => p.$w || 24}px;
  height: ${(p) => p.$h || 24}px;
  ${(p) =>
    p.$on &&
    css`
      background: linear-gradient(#5b7592, #6f8dae);
      border: 1px solid #4e5f72;
    `}
  ${(p) =>
    p.$raised &&
    css`
      background: ${p.$on ? "linear-gradient(#56708e, #6985a6)" : "linear-gradient(#525252, #363636)"};
      border: 1px solid #191919;
      border-top-color: #646464;
    `}
  ${(p) =>
    p.$corner &&
    css`
      &::after {
        content: "";
        position: absolute;
        right: 0;
        bottom: 1px;
        border: 4px solid transparent;
        ${p.$corner === "down"
          ? "border-top-color: #8d8d8d; border-bottom: none;"
          : `border-left-color: ${p.$on ? "#222b35" : "#8d8d8d"}; border-right: none;`}
      }
    `}
`;

const Tool = ({ icon, label, size, corner, on, raised, w, h, disabled }) => (
  <ToolButton type="button" aria-label={label || icon} $corner={corner} $on={on} $raised={raised} $w={w} $h={h} disabled={disabled}>
    <Icon name={icon} size={size} />
  </ToolButton>
);

const SelectBox = styled.div`
  display: flex;
  align-items: stretch;
  flex: none;
  width: ${(p) => p.$w}px;
  height: ${(p) => p.$h || 22}px;
  background: linear-gradient(#525252, #3d3d3d);
  border: 1px solid #222;
  border-top-color: #5e5e5e;
  opacity: ${(p) => (p.$dim ? 0.5 : 1)};
`;

const SelectIcon = styled.span`
  display: flex;
  align-items: center;
  padding: 0 1px 0 4px;
`;

const SelectField = styled.select`
  appearance: none;
  flex: 1;
  min-width: 0;
  padding: 0 ${(p) => (p.$center ? 0 : 2)}px;
  font-size: ${(p) => p.$size || 11}px;
  text-align: ${(p) => (p.$center ? "center" : "left")};
  text-align-last: ${(p) => (p.$center ? "center" : "left")};
  outline: none;
`;

const SelectArrows = styled.span`
  width: ${(p) => p.$w || 24}px;
  display: flex;
  flex-direction: column;
  align-items: center;
  justify-content: center;
  background: linear-gradient(#303030, #262626);
`;

const Select = ({ icon, label, value, w, h, size, arrowW, single, center, dim }) => (
  <SelectBox $w={w} $h={h} $dim={dim}>
    {icon && (
      <SelectIcon>
        <Icon name={icon} size={14} />
      </SelectIcon>
    )}
    <SelectField aria-label={label} $size={size} $center={center} defaultValue={value} disabled={dim}>
      <option>{value}</option>
    </SelectField>
    <SelectArrows $w={arrowW}>
      {!single && <Triangle dir="up" />}
      <Triangle dir="down" />
    </SelectArrows>
  </SelectBox>
);

/* ---------- menu bar ---------- */

const MenuBar = styled.header`
  display: flex;
  background: linear-gradient(#3b3b3b, #2f2f2f);
  border-bottom: 1px solid #050505;
`;

const Menus = styled.nav`
  display: flex;
  align-items: center;
  gap: ${(p) => p.$gap}px;
  padding: 0 ${(p) => p.$right}px 0 ${(p) => p.$left}px;
`;

const MenuButton = styled.button`
  font-size: 12px;
  color: #cdcdcd;
`;

const MenuTools = styled.div`
  display: flex;
  flex: 1;
  align-items: center;
  gap: 4px;
  padding-right: 5px;
`;

const mainMenu = ["File", "Edit", "Render", "Assets", "Windows", "Labs", "Help"];

const TopMenu = () => (
  <MenuBar>
    <Handle><Triangle dir="up" color="#000" size={6} /></Handle>
    <Menus aria-label="Main menu" $gap={9} $left={7} $right={22}>
      {mainMenu.map((m) => <MenuButton type="button" key={m}>{m}</MenuButton>)}
    </Menus>
    <MenuTools>
      <Select icon="layout" label="Desktop" value="custum1" w={128} size={12} />
      <Select icon="target" label="Radial menu" value="Main" w={128} size={12} />
      <Spacer />
      <Select icon="clapper" label="Take" value="Main" w={172} size={12} />
      <Tool icon="help" label="Help" size={15} />
    </MenuTools>
  </MenuBar>
);

/* ---------- shelves ---------- */

const Shelves = styled.div`
  display: grid;
  grid-template-columns: 9px minmax(0, 955fr) 11px minmax(0, 945fr);
  border-bottom: 1px solid #050505;
`;

const ShelfGrip = styled.div`
  display: flex;
  align-items: center;
  justify-content: center;
  background: linear-gradient(90deg, #4a4a4a, #303030);
  border: solid #0a0a0a;
  border-width: 0 1px;
`;

const Shelf = styled.section`
  display: flex;
  flex-direction: column;
  min-width: 0;
`;

const ShelfTabs = styled.div`
  display: flex;
  height: 18px;
  background: #2b2b2b;
`;

const ShelfTab = styled.button`
  flex: none;
  padding: 0 6px;
  font-size: 9px;
  line-height: 16px;
  color: #c9c9c9;
  white-space: nowrap;
  background: ${(p) => (p.$on ? "#484848" : "linear-gradient(#333, #292929)")};
  border-right: 1px solid #050505;
  border-top: 1px solid #565656;
  border-bottom: 1px solid ${(p) => (p.$on ? "#484848" : "#050505")};
`;

const ShelfTabEnd = styled.div`
  display: flex;
  flex: 1;
  align-items: center;
  justify-content: space-between;
  padding: 0 5px 0 9px;
  border-bottom: 1px solid #050505;
`;

const ShelfBody = styled.div`
  display: flex;
  flex: 1;
  padding-left: ${(p) => p.$inset}px;
  background: linear-gradient(#484848, #3a3a3a);
  overflow: hidden;
`;

const ShelfItems = styled.div`
  display: flex;
  flex: 1;
  min-width: 0;
  overflow: hidden;
`;

const ShelfItem = styled.button`
  display: flex;
  flex: none;
  flex-direction: column;
  align-items: center;
  min-width: ${(p) => (p.$wide ? p.$wide : 41)}px;
  padding: 2px 4px 0;
  font-size: 9px;
  line-height: ${(p) => (p.$wide ? 9 : 16)}px;
  color: #c9c9c9;
  white-space: pre;
`;

const ScrollArrow = styled.button`
  width: 17px;
  min-height: 24px;
  display: flex;
  align-items: center;
  justify-content: center;
`;

const PlusButton = styled.button`
  display: flex;
  align-items: center;
  justify-content: center;
  width: 12px;
  height: 14px;
`;

const Plus = () => (
  <PlusButton type="button" aria-label="Add tab">
    <svg width="10" height="10" viewBox="0 0 10 10">
      <path d="M5 0 V10 M0 5 H10" stroke="#e2e2e2" strokeWidth="2.500" />
    </svg>
  </PlusButton>
);

const Dots = ({ cols, rows, color = "#0b0b0b" }) => (
  <svg width={cols * 3} height={rows * 3} aria-hidden="true">
    {Array.from({ length: cols * rows }, (_, i) => (
      <rect key={i} x={(i % cols) * 3} y={Math.floor(i / cols) * 3} width="2" height="2" fill={color} />
    ))}
  </svg>
);

const createTabs = ["Create", "Modify", "Model", "Polygon", "Deform", "Texture", "Rigging", "Characters", "Constraints", "Hair Utils", "Guide Process", "Terrain FX", "Simple FX", "Volume", "Houdini Engine", "SideFX Labs"];
const lightTabs = ["Lights and Cameras", "Collisions", "Particles", "Grains", "Vellum", "Rigid Bodies", "Particle Fluids", "Viscous Fluids", "Oceans", "Pyro FX", "FEM", "Wires", "Crowds", "Drive Simulation"];

const createTools = [
  ["box", "Box"], ["sphere", "Sphere"], ["tube", "Tube"], ["torus", "Torus"], ["grid", "Grid"],
  ["nullo", "Null"], ["line", "Line"], ["circle", "Circle"], ["bezier", "Curve Bezier"],
  ["drawcurve", "Draw Curve"], ["path", "Path"], ["spray", "Spray Paint"], ["font", "Font"],
  ["platonic", "Platonic\nSolids", 66], ["lsystem", "L-System"], ["metaball", "Metaball"],
  ["file", "File"], ["spiral", "Spiral"], ["helix", "Helix"], ["quick", "Quick Shapes"],
];

const lightTools = [
  ["camera", "Camera"], ["point", "Point Light"], ["spot", "Spot Light"], ["area", "Area Light"],
  ["geolight", "Geometry\nLight", 66], ["volume", "Volume Light"], ["distant", "Distant Light"],
  ["environment", "Environment\nLight", 66], ["sky", "Sky Light"], ["gi", "GI Light"],
  ["caustic", "Caustic Light"], ["portal", "Portal Light"], ["ambient", "Ambient Light"],
  ["stereo", "Stereo\nCamera", 66], ["vr", "VR Camera"], ["switcher", "Switcher"],
  ["gamecam", "Gam\nCa", 41],
];

const ShelfSet = ({ tabs, tools, inset, scroll }) => (
  <Shelf>
    <ShelfTabs>
      {tabs.map((t, i) => <ShelfTab type="button" key={t} $on={i === 0}>{t}</ShelfTab>)}
      <ShelfTabEnd>
        <Plus />
        <Triangle dir="down" color="#ddd" size={8} />
      </ShelfTabEnd>
    </ShelfTabs>
    <ShelfBody $inset={inset}>
      <ShelfItems>
        {tools.map(([icon, label, wide]) => (
          <ShelfItem type="button" key={label} $wide={wide}>
            <Icon name={icon} size={wide ? 18 : 20} />
            {label}
          </ShelfItem>
        ))}
      </ShelfItems>
      {scroll && (
        <ScrollArrow type="button" aria-label="Scroll shelf">
          <Triangle dir="right" size={9} />
        </ScrollArrow>
      )}
    </ShelfBody>
  </Shelf>
);

/* ---------- panes ---------- */

const Main = styled.main`
  display: grid;
  grid-template-columns: 7px minmax(0, 1293fr) 7px minmax(0, 613fr);
  min-height: 0;
`;

const VSplit = styled.div`
  display: flex;
  flex-direction: column;
  align-items: center;
  gap: 18px;
  padding-top: 370px;
  background: #4b4b4b;
  border-left: 2px solid #060606;
`;

const HSplit = styled.div`
  display: flex;
  flex: none;
  align-items: center;
  justify-content: center;
  gap: 18px;
  height: ${(p) => p.$h}px;
  background: #4b4b4b;
  border-top: 1px solid #777;
  border-left: 1px solid #777;
`;

const Column = styled.div`
  display: flex;
  flex-direction: column;
  min-width: 0;
  min-height: 0;
`;

const Pane = styled.section`
  display: flex;
  flex-direction: column;
  flex: ${(p) => p.$flex || "none"};
  min-height: 0;
  min-width: 0;
`;

const PaneTabs = styled.div`
  display: flex;
  flex: none;
  height: 19px;
  background: #2b2b2b;
`;

const PaneTab = styled.button`
  display: flex;
  align-items: center;
  gap: ${(p) => (p.$roomy ? 13 : 10)}px;
  flex: none;
  padding: 0 4px 0 ${(p) => (p.$on ? 6 : 7)}px;
  font-size: 10px;
  line-height: 17px;
  color: ${(p) => (p.$italic ? "#a9a9a9" : "#cdcdcd")};
  font-style: ${(p) => (p.$italic ? "italic" : "normal")};
  white-space: nowrap;
  background: ${(p) => (p.$on ? "#4a4a4a" : "linear-gradient(90deg, #222, #303030 8px)")};
  border-right: 1px solid #1b1b1b;
`;

const PaneTabsEnd = styled.div`
  display: flex;
  flex: 1;
  align-items: center;
  gap: 9px;
  padding: 0 5px 0 8px;
`;

const MaxButton = styled.button`
  width: 10px;
  height: 8px;
  background: linear-gradient(135deg, #f1f1f1, #c4c4c0);
`;

const PathRow = styled.div`
  display: flex;
  flex: none;
  align-items: center;
  height: 34px;
  padding: 0 2px 0 1px;
  background: linear-gradient(#4a4a4a, #3a3a3a);
  border-bottom: 1px solid #050505;
`;

const PathBox = styled.div`
  display: flex;
  flex: 1;
  align-items: stretch;
  height: 24px;
  margin: 0 5px;
  background: linear-gradient(#424242, #393939);
  border: 1px solid #050505;
`;

const Crumb = styled.a`
  display: flex;
  align-items: center;
  gap: 4px;
  padding: 0 5px;
  color: #d2d2d2;
  text-decoration: none;
`;

const PathDrop = styled.button`
  display: flex;
  align-items: center;
  justify-content: center;
  width: 18px;
  margin-left: auto;
  background: linear-gradient(#3b3b3b, #242424);
`;

const CloseX = () => (
  <svg width="6" height="6" viewBox="0 0 6 6" aria-hidden="true">
    <path d="M1 1 L5 5 M5 1 L1 5" stroke="#d9d9d9" strokeWidth="1.500" />
  </svg>
);

const TabStrip = ({ tabs, italic }) => (
  <PaneTabs>
    {tabs.map((t, i) => (
      <PaneTab type="button" key={t} $on={i === 0} $italic={italic && i === 0} $roomy={italic}>
        {t}
        <CloseX />
      </PaneTab>
    ))}
    <PaneTabsEnd>
      <Plus />
      <Spacer />
      <MaxButton type="button" aria-label="Maximize pane" />
      <Triangle dir="down" color="#ddd" size={8} />
    </PaneTabsEnd>
  </PaneTabs>
);

const PathBar = ({ extra }) => (
  <PathRow>
    <Tool icon="back" label="Back" size={17} corner="right" />
    <Tool icon="forward" label="Forward" size={17} />
    <PathBox>
      <Crumb href="#obj"><Icon name="clapper" size={18} />obj</Crumb>
      <svg width="7" height="22" viewBox="0 0 7 22" aria-hidden="true">
        <path d="M0 0 L5 11 L0 22" fill="none" stroke="#111" strokeWidth="1.500" />
        <path d="M1 0 L6 11 L1 22" fill="none" stroke="#666" strokeWidth="0.700" />
      </svg>
      <Crumb href="#circle"><Icon name="shapes" size={18} />circle</Crumb>
      <PathDrop type="button" aria-label="Recent paths"><Triangle dir="down" /></PathDrop>
    </PathBox>
    <Tool icon="pin" label="Pin" size={17} />
    <Tool icon="rings" label="Link group" size={18} />
    {extra}
  </PathRow>
);

/* ---------- scene view ---------- */

const SceneBar = styled.div`
  display: flex;
  flex: none;
  align-items: center;
  height: 31px;
  padding-right: 1px;
  background: #2d2d2d;
  border-top: 1px solid #555;
`;

const SceneTools = styled.div`
  display: flex;
  flex: 1;
  align-items: center;
  justify-content: center;
  gap: 4px;
`;

const ToolGroup = styled.div`
  display: flex;
  gap: ${(p) => p.$gap || 0}px;
`;

const Divider = styled.span`
  width: 1px;
  height: 24px;
  background: #4d4d4d;
`;

const SceneHandle = styled(Handle)`
  align-self: stretch;
  border-left-width: 1px;
`;

const SceneBody = styled.div`
  display: flex;
  flex: 1;
  min-height: 0;
`;

const SideBar = styled.div`
  display: flex;
  flex-direction: column;
  align-items: center;
  flex: none;
  gap: ${(p) => p.$gap || 0}px;
  width: ${(p) => p.$w}px;
  background: #3a3a3a;
  overflow: hidden;
`;

const Collapse = styled.button`
  display: flex;
  align-items: center;
  align-self: stretch;
  flex: none;
  justify-content: ${(p) => (p.$right ? "flex-end" : "flex-start")};
  height: 10px;
  margin-bottom: ${(p) => p.$below}px;
  padding: 0 2px;
  background: linear-gradient(#555, #3e3e3e);
  border: 1px solid #0a0a0a;
`;

const SideGroup = styled.div`
  display: flex;
  flex-direction: column;
  border: 1px solid #111;
`;

const SideRule = styled.span`
  align-self: stretch;
  flex: none;
  height: 1px;
  margin: ${(p) => p.$top || 3}px 3px ${(p) => p.$bottom || 4}px;
  background: #575757;
`;

const Viewport = styled.div`
  position: relative;
  flex: 1;
  min-width: 0;
  background: #000;
  overflow: hidden;
`;

const Scene = styled.svg`
  position: absolute;
  inset: 0;
  width: 100%;
  height: 100%;
`;

const ViewTitle = styled.h2`
  position: absolute;
  top: 16px;
  left: 16px;
  display: flex;
  align-items: center;
  gap: 12px;
  margin: 0;
  font: 700 13px/22px "Noto Sans", sans-serif;
  color: #fff;
`;

const ViewMenus = styled.div`
  position: absolute;
  top: 6px;
  right: 6px;
  display: flex;
  gap: 7px;
`;

const PillButton = styled.button`
  display: flex;
  align-items: center;
  gap: 3px;
  height: 20px;
  padding: 0 5px 0 6px;
  color: #c9c9c9;
  background: rgba(20, 20, 20, 0.7);
  border: 1px solid #8b8b8b;
  border-radius: 9px;
`;

const Edition = styled.p`
  position: absolute;
  right: 12px;
  bottom: 9px;
  margin: 0;
  color: #c3c300;
`;

// ground plane (x, z) to screen
const project = (x, z) => {
  const w = 1 - 0.06225 * x - 0.2423 * z;
  return [(368.6 * x - 260.8 * z + 749.2) / w, (17 * x + 71.8 * z + 368.6) / w];
};

const segment = (a, b) => {
  const [x1, y1] = project(...a);
  const [x2, y2] = project(...b);
  return `M${x1.toFixed(1)} ${y1.toFixed(1)} L${x2.toFixed(1)} ${y2.toFixed(1)}`;
};

const steps = (from, to) => Array.from({ length: to - from + 1 }, (_, i) => from + i);

const gridLines = [
  ...steps(-25, 20).map((i) => ({ key: `x${i}`, major: i % 5 === 0, d: segment([i / 5, -5], [i / 5, 2.4]) })),
  ...steps(-20, 12).map((i) => ({ key: `z${i}`, major: i % 5 === 0, d: segment([-5, i / 5], [3, i / 5]) })),
];

const linePoints = steps(0, 9).map((i) => project(0, i / 9));

const ViewScene = () => (
  <Scene viewBox="41 168 1233 535" preserveAspectRatio="xMidYMid slice" role="img" aria-label="Perspective view of line5">
    {gridLines.map((l) => (
      <path key={l.key} d={l.d} stroke={l.major ? "#252e38" : "#252d35"} strokeWidth={l.major ? 2 : 1} />
    ))}
    <g fontFamily="Noto Sans" fontWeight="600">
      <g fill="#76504f" fontStyle="italic">
        <text x="326" y="328" fontSize="18">-</text>
        <text x="347" y="328" fontSize="18">1</text>
        <text x="731" y="367" fontSize="20">0</text>
        <text x="1164" y="407" fontSize="18" fontStyle="normal">1</text>
      </g>
      <g fill="#4c4c6c">
        <text fontSize="26" transform="translate(758 370) rotate(93)">0</text>
        <text fontSize="44" transform="translate(648 583) rotate(99)">1</text>
        <text fontSize="22" transform="translate(818 236) rotate(93)">-1</text>
      </g>
    </g>
    <path d={segment([0, 0], [0, 1])} stroke="#d8d8d8" strokeWidth="1.500" />
    {linePoints.map(([x, y]) => (
      <rect key={y} x={x - 1.5} y={y - 1.5} width="3" height="3" fill="#3fe0e0" />
    ))}
    <g fontFamily="Noto Sans" fontSize="11">
      <path d="M56 688 V677" stroke="#3c8f3c" strokeWidth="1.500" />
      <path d="M56 688 L68 689" stroke="#b54545" strokeWidth="1.500" />
      <text x="57" y="677" fill="#65d865">y</text>
      <text x="69" y="689" fill="#d86060">x</text>
      <text x="53" y="693" fill="#7070e8">z</text>
    </g>
  </Scene>
);

const SceneView = () => (
  <Pane $flex="1">
    <TabStrip tabs={["Scene View", "Animation Editor", "Render View", "Composite View", "Motion FX View", "Geometry Spreadsheet"]} />
    <PathBar
      extra={
        <>
          <Spacer $w={9} />
          <Tool icon="box" label="Shading" size={18} corner="down" />
          <Tool icon="ghost" label="Other objects" size={18} corner="down" />
          <Tool icon="white" label="Layout" size={17} corner="down" />
        </>
      }
    />
    <SceneBar>
      <SceneHandle><Triangle dir="up" color="#000" size={6} /></SceneHandle>
      <Spacer $w={2} />
      <Tool icon="dots" label="Tool menu" size={16} corner="down" />
      <SceneTools>
        <ToolGroup $gap={9}>
          <Tool icon="selRotate" size={18} corner="down" />
          <Tool icon="selBrush" size={18} corner="down" />
          <Tool icon="selMove" size={18} corner="down" />
        </ToolGroup>
        <Divider />
        <ToolGroup>
          <Tool icon="cubes" size={20} on />
          <Tool icon="zoombox" size={16} />
        </ToolGroup>
        <Divider />
        <Tool icon="noentry" size={18} />
        <Divider />
        <ToolGroup>
          <Tool icon="flycam" size={18} />
          <Tool icon="gearbox" size={17} />
        </ToolGroup>
      </SceneTools>
      <Tool icon="people" label="Dependents" size={17} corner="down" />
      <Tool icon="help" label="Help" size={15} />
    </SceneBar>
    <SceneBody>
      <SideBar $w={34} $gap={4}>
        <Collapse type="button" aria-label="Collapse toolbar" $below={3}><Triangle dir="left" color="#000" /></Collapse>
        <SideGroup>
          <Tool icon="cone" label="Objects" corner="right" raised />
          <Tool icon="diamond" label="Primitives" corner="right" raised on />
          <Tool icon="yellowcube" label="Dynamics" corner="right" raised />
        </SideGroup>
        <SideRule $bottom={16} />
        <Tool icon="arrow" label="Select" w={26} corner="right" />
        <Tool icon="lock" label="Secure selection" w={26} h={26} size={17} on />
        {["move", "rotate", "scale"].map((n) => <Tool key={n} icon={n} w={26} h={23} />)}
        <Tool icon="pose" w={26} />
        <Tool icon="handles" w={26} corner="right" />
        <SideRule $top={2} $bottom={2} />
        {["magnetGrid", "magnetCurve", "magnetPoint", "magnet"].map((n) => <Tool key={n} icon={n} w={26} corner="right" />)}
        <SideRule $top={2} $bottom={3} />
        <Tool icon="camera" label="View tool" w={26} h={20} on />
        <Triangle dir="down" size={10} />
        <Tool icon="flip" w={26} h={22} size={18} corner="right" />
        <Tool icon="reel" w={26} h={22} size={19} corner="right" />
      </SideBar>
      <Viewport>
        <ViewScene />
        <ViewTitle><Icon name="camera" size={22} />View</ViewTitle>
        <ViewMenus>
          <PillButton type="button">Persp<Triangle dir="down" color="#ddd" size={7} /></PillButton>
          <PillButton type="button">No cam<Triangle dir="down" color="#ddd" size={7} /></PillButton>
        </ViewMenus>
        <Edition>Indie Edition</Edition>
      </Viewport>
      <SideBar $w={26} $gap={1}>
        <Collapse type="button" aria-label="Collapse display options" $right $below={19}><Triangle dir="right" color="#000" /></Collapse>
        <Tool icon="plane" size={17} corner="right" on />
        <Tool icon="greenplane" size={16} corner="right" />
        <Tool icon="padlock" label="Lock camera" size={15} />
        <Tool icon="bulbOff" size={16} />
        <Tool icon="discs" size={17} corner="right" />
        <Tool icon="bulbAdd" size={16} corner="right" />
        <Tool icon="bulbShadow" size={17} corner="right" on />
        <Tool icon="checker" size={17} corner="right" on />
        <Tool icon="glasses" size={17} corner="down" />
        <Tool icon="glassesPlay" size={17} corner="right" />
        <SideRule $top={1} $bottom={2} />
        <Tool icon="dot" size={19} on />
        <Tool icon="dotNormal" size={17} />
        <Tool icon="dotDrag" size={16} />
        <Tool icon="pointNum" size={18} />
        <Tool icon="primNormal" size={16} />
        <Tool icon="primNum" size={18} />
        <Tool icon="curveHull" size={16} />
        <Tool icon="prims" size={17} on />
        <Tool icon="texture" size={16} corner="right" on />
        <ScrollArrow type="button" aria-label="More display options">
          <Triangle dir="down" />
        </ScrollArrow>
      </SideBar>
    </SceneBody>
  </Pane>
);

/* ---------- geometry spreadsheet ---------- */

const NodeBar = styled.div`
  display: flex;
  flex: none;
  align-items: center;
  height: 30px;
  padding: 0 2px 0 0;
  background: #333;
  border-top: 1px solid #666;
  border-bottom: 1px solid #050505;
`;

const NodeName = styled.div`
  width: 248px;
  padding-left: 6px;
  color: #d2d2d2;
`;

const FieldLabel = styled.label`
  padding: 0 1px 0 3px;
  white-space: nowrap;
`;

const DarkInput = styled.input`
  flex: ${(p) => p.$flex || "1 1 0"};
  min-width: 0;
  width: ${(p) => (p.$w ? `${p.$w}px` : "auto")};
  height: ${(p) => p.$h || 22}px;
  padding: 2px 3px 0;
  background: #131313;
  border: 1px solid #2a2a2a;
  outline: none;
  font-family: ${mono};
  font-size: 12px;
  font-weight: ${(p) => (p.$bold ? 700 : 400)};
  color: #e4e4e4;
  &:disabled { background: #323232; color: #525252; }
`;

const BarGap = styled.span`
  flex: none;
  width: 4px;
`;

const SheetBody = styled.div`
  display: flex;
  height: 86px;
  flex: none;
`;

const SheetScroll = styled.div`
  position: relative;
  flex: 1;
  min-width: 0;
  margin-left: 2px;
  border-bottom: 1px solid #555;
  border-right: 1px solid #555;
  overflow: hidden;
`;

const Sheet = styled.table`
  width: 100%;
  table-layout: fixed;
  border-collapse: separate;
  border-spacing: 0;
  line-height: 16px;
  color: #c9c9c9;
  th, td {
    height: 18px;
    padding: 0 4px;
    font-weight: 400;
    text-align: left;
    border-right: 1px solid #151515;
  }
  thead th {
    height: 16px;
    line-height: 14px;
    background: linear-gradient(#363636, #232323);
    border-top: 1px solid #050505;
    border-bottom: 1px solid #151515;
  }
  tbody th {
    line-height: 15px;
    background: linear-gradient(#2d2d2d, #222);
    border-bottom: 1px solid #050505;
  }
  td { font-family: ${mono}; font-size: 12px; padding: 1px 4px 0 3px; }
  tbody tr:nth-child(odd) td { background: #2e2e2e; }
  tbody tr:nth-child(even) td { background: #393939; }
  th:nth-child(-n + 4) { width: 85px; }
`;

const SheetMark = styled.span`
  position: absolute;
  right: 6px;
  bottom: -2px;
  font-size: 12px;
  color: #dcdcdc;
`;

const VScroll = styled.div`
  display: flex;
  flex-direction: column;
  width: 14px;
  margin-left: 1px;
  background: #262626;
`;

const ScrollThumb = styled.button`
  display: flex;
  align-items: center;
  justify-content: center;
  flex: none;
  height: ${(p) => p.$h}px;
  background: linear-gradient(#4b4b4b, #363636);
  border-bottom: 1px solid #0a0a0a;
`;

const HScroll = styled.div`
  display: flex;
  align-items: center;
  height: 16px;
  padding-right: 16px;
  background: #343434;
`;

const HThumb = styled.button`
  display: flex;
  flex: 1;
  align-items: center;
  justify-content: center;
  height: 14px;
  border: 1px solid #2c2c2c;
`;

const HArrow = styled.button`
  display: flex;
  align-items: center;
  justify-content: center;
  width: 17px;
  height: 14px;
`;

const sheetRows = [
  ["0", "0.0", "0.0", "0.0"],
  ["1", "0.0", "0.0", "0.111111"],
  ["2", "0.0", "0.0", "0.222222"],
  ["3", "0.0", "0.0", "0.333333"],
];

const Spreadsheet = () => (
  <Pane>
    <TabStrip tabs={["Geometry Spreadsheet"]} />
    <PathBar />
    <NodeBar>
      <NodeName><b>Node:</b>line5</NodeName>
      <Tool icon="points" label="Points" w={20} size={16} raised on />
      <Tool icon="vertex" label="Vertices" w={20} size={16} raised />
      <Tool icon="diamond" label="Primitives" w={20} size={16} raised />
      <Tool icon="shapes" label="Detail" w={20} size={16} raised />
      <FieldLabel htmlFor="group">Group:</FieldLabel>
      <DarkInput id="group" $flex="0 1 178px" />
      <Tool icon="funnel" label="Filter group" w={20} size={15} raised />
      <BarGap />
      <Select label="View" value="View" w={106} arrowW={20} single center />
      <BarGap />
      <Select label="Intrinsics" value="Intrinsics" w={128} arrowW={20} single center dim />
      <FieldLabel htmlFor="attributes">Attributes:</FieldLabel>
      <DarkInput id="attributes" $flex="0 1 178px" />
      <Tool icon="funnel" label="Filter attributes" w={20} size={15} raised />
      <BarGap />
      <Tool icon="pageArrow" label="Page" w={18} h={20} size={12} raised />
      <Spacer />
      <Tool icon="help" label="Help" size={15} />
    </NodeBar>
    <SheetBody>
      <SheetScroll>
        <Sheet>
          <thead>
            <tr>
              <th scope="col" aria-label="Point" />
              <th scope="col">P[x]</th>
              <th scope="col">P[y]</th>
              <th scope="col">P[z]</th>
              <th aria-hidden="true" />
            </tr>
          </thead>
          <tbody>
            {sheetRows.map(([n, ...v]) => (
              <tr key={n}>
                <th scope="row">{n}</th>
                {v.map((x, i) => <td key={i}>{x}</td>)}
                <td />
              </tr>
            ))}
          </tbody>
        </Sheet>
        <SheetMark>Indie</SheetMark>
      </SheetScroll>
      <VScroll>
        <ScrollThumb type="button" aria-label="Scroll rows" $h={20}><Dots cols={3} rows={3} /></ScrollThumb>
        <Spacer />
        <ScrollThumb type="button" aria-label="Scroll up" $h={18}><Triangle dir="up" color="#555" size={7} /></ScrollThumb>
        <ScrollThumb type="button" aria-label="Scroll down" $h={17}><Triangle dir="down" size={7} /></ScrollThumb>
      </VScroll>
    </SheetBody>
    <HScroll>
      <HThumb type="button" aria-label="Scroll columns"><Dots cols={4} rows={3} /></HThumb>
      <HArrow type="button" aria-label="Scroll left"><Triangle dir="left" color="#555" size={7} /></HArrow>
      <HArrow type="button" aria-label="Scroll right"><Triangle dir="right" color="#555" size={7} /></HArrow>
    </HScroll>
  </Pane>
);

/* ---------- parameters ---------- */

const ParmHead = styled.div`
  display: flex;
  flex: none;
  align-items: center;
  gap: 2px;
  height: 27px;
  padding-right: 2px;
  background: #3a3a3a;
  border-bottom: 1px solid #050505;
`;

const NodeType = styled.label`
  padding-right: 3px;
  font-size: 12px;
  font-weight: 700;
  color: #cfcfcf;
`;

const ParmList = styled.div`
  flex: 1;
  padding: 2px 11px 0 17px;
  background: #3a3a3a;
`;

const ParmRow = styled.div`
  display: grid;
  grid-template-columns: 128px minmax(0, 1fr);
  gap: 10px;
  align-items: center;
  height: 25px;
`;

const ParmLabel = styled.label`
  padding-right: 6px;
  line-height: 19px;
  text-align: right;
  background: ${(p) => (p.$hover ? "#525252" : "none")};
  color: ${(p) => (p.$dim ? "#6b6b6b" : "#c9c9c9")};
`;

const ParmFields = styled.div`
  display: flex;
  align-items: center;
  gap: 3px;
`;

const SliderWrap = styled.div`
  position: relative;
  flex: 1;
  min-width: 0;
  padding-left: 1px;
  margin-right: 2px;
  opacity: ${(p) => (p.$dim ? 0.25 : 1)};
`;

const Slider = styled.input`
  appearance: none;
  display: block;
  width: 100%;
  height: 21px;
  outline: none;
  background:
    linear-gradient(#0d4f9e, #0d4f9e) 1px 9px / ${(p) => p.$fill}% 3px no-repeat,
    linear-gradient(#000, #000) 0 8px / 100% 5px no-repeat;
  &::-webkit-slider-thumb {
    appearance: none;
    width: 6px;
    height: 21px;
    background: linear-gradient(90deg, #b3b3b3, #7b7b7b);
    border: 1px solid #1b1b1b;
  }
`;

const Ticks = styled.div`
  position: absolute;
  left: 1px;
  right: 0;
  bottom: 4px;
  display: flex;
  justify-content: space-between;
  pointer-events: none;
  i {
    width: 1px;
    height: 2px;
    background: #b5b5b5;
  }
`;

const VectorParm = ({ name, values, bold = [], hover }) => (
  <ParmRow>
    <ParmLabel htmlFor={`${name}-0`} $hover={hover}>{name}</ParmLabel>
    <ParmFields>
      {values.map((v, i) => (
        <DarkInput key={i} id={`${name}-${i}`} aria-label={`${name} ${i + 1}`} defaultValue={v} $bold={bold.includes(i)} />
      ))}
    </ParmFields>
  </ParmRow>
);

const SliderParm = ({ name, value, max, fill, ticks, bold, dim }) => (
  <ParmRow>
    <ParmLabel htmlFor={name} $dim={dim}>{name}</ParmLabel>
    <ParmFields>
      <DarkInput id={name} defaultValue={value} $flex="none" $w={74} $bold={bold} disabled={dim} />
      <SliderWrap $dim={dim}>
        <Slider type="range" aria-label={`${name} slider`} min="0" max={max} defaultValue={(fill / 100) * max} step="any" $fill={dim ? 0 : fill} disabled={dim} />
        {ticks && <Ticks>{steps(0, ticks).map((i) => <i key={i} />)}</Ticks>}
      </SliderWrap>
    </ParmFields>
  </ParmRow>
);

const Parameters = () => (
  <Pane $flex="403 1 0">
    <TabStrip italic tabs={["line5", "Take List", "Performance Monitor"]} />
    <PathBar />
    <ParmHead>
      <Tool icon="line" label="Node menu" size={16} corner="down" />
      <NodeType htmlFor="nodename">Line</NodeType>
      <DarkInput id="nodename" defaultValue="line5" />
      <BarGap />
      <Tool icon="gear" label="Settings" size={16} corner="down" />
      <Tool icon="brush" label="Presets" size={17} corner="down" />
      <Tool icon="search" label="Find" size={16} />
      <Tool icon="info" label="Info" size={15} />
      <Tool icon="help" label="Help" size={15} />
    </ParmHead>
    <ParmList>
      <ParmRow>
        <ParmLabel as="span">Primitive Type</ParmLabel>
        <Select label="Primitive Type" value="Polygon" w={90} center />
      </ParmRow>
      <VectorParm name="Origin" values={["0", "0", "0"]} hover />
      <VectorParm name="Direction" values={["0", "0", "1"]} bold={[1, 2]} />
      <SliderParm name="Length" value="1" max={10} fill={10} />
      <SliderParm name="Points" value="10" max={50} fill={20} ticks={25} bold />
      <SliderParm name="Order" value="4" max={9} fill={22} ticks={9} dim />
    </ParmList>
  </Pane>
);

/* ---------- network ---------- */

const NetBar = styled.div`
  display: flex;
  flex: none;
  align-items: center;
  height: 25px;
  background: linear-gradient(#3b3b3b, #303030);
  border-bottom: 1px solid #050505;
`;

const NetTools = styled.div`
  display: flex;
  flex: 1;
  justify-content: space-between;
`;

const Canvas = styled.div`
  position: relative;
  flex: 1;
  background: #303030;
  overflow: hidden;
`;

const Watermark = styled.p`
  position: absolute;
  top: ${(p) => p.$top}px;
  right: ${(p) => p.$right}px;
  margin: 0;
  font-size: ${(p) => p.$size}px;
  line-height: 30px;
  font-weight: ${(p) => (p.$bold ? 700 : 400)};
  color: ${(p) => (p.$bold ? "#505050" : "#424242")};
`;

const NodeSpot = styled.div`
  position: absolute;
  left: ${(p) => p.$x}px;
  top: ${(p) => p.$y}px;
  display: flex;
  align-items: center;
  gap: 5px;
  font-size: 15px;
  line-height: 20px;
  color: #c6c6c6;
`;

const Highlight = styled.div`
  position: absolute;
  left: 265px;
  top: 89px;
  width: 230px;
  height: 116px;
  border: 5px solid #f80000;
  border-radius: 7px;
  box-shadow: inset 0 0 6px #1c1c1c;
`;

const NodeArt = ({ selected }) => (
  <svg width="80" height="80" viewBox="0 0 80 80" aria-hidden="true">
    {selected && (
      <>
        <circle cx="40" cy="40" r="38" fill="#45689b" />
        <circle cx="40" cy="40" r="25" fill="#9272cb" />
        <rect x="1" y="26" width="78" height="28" rx="5" fill="#ffd800" />
        <rect x="3" y="28" width="74" height="24" rx="3" fill="#3a3418" />
      </>
    )}
    <rect x="3" y="28" width="74" height="24" rx="4" fill="#cacaca" stroke={selected ? "#181818" : "#8c8c8c"} />
    {selected && <path d="M69 28.500 H74 a2.500 2.500 0 0 1 2.500 2.500 V49 a2.500 2.500 0 0 1 -2.500 2.500 H66Z" fill="#00acf2" />}
    <path d="M14 28 L11 52 M25 28 L22 52 M58 28 L55 52 M69 28 L66 52" stroke="#8b8b8b" />
    {selected ? (
      <g>
        <path d="M34 31 V49 M31 48 H48" stroke="#b5b5b5" strokeWidth="2" />
        <path d="M40 37 L46 48" stroke="#b06a6a" strokeDasharray="2 1" />
        <path d="M32 48 L45 32" stroke="#d08a8a" strokeWidth="2.500" />
        <path d="M33 47 L44 33" stroke="#3d2323" strokeWidth="1.500" />
      </g>
    ) : (
      <circle cx="40" cy="40" r="9" fill="none" stroke="#7b8391" strokeWidth="2" />
    )}
    <circle cx="40" cy="57" r="3.500" fill="#b3b3b3" />
  </svg>
);

const netMenu = ["Add", "Edit", "Go", "View", "Tools", "Layout", "Labs", "Help"];

const Network = () => (
  <Pane $flex="402 1 0">
    <TabStrip italic tabs={["/obj/circle", "Tree View", "Material Palette", "Asset Browser"]} />
    <PathBar />
    <NetBar>
      <SceneHandle><Triangle dir="up" color="#000" size={6} /></SceneHandle>
      <Menus aria-label="Network menu" $gap={13} $left={10} $right={7}>
        {netMenu.map((m) => <MenuButton type="button" key={m}>{m}</MenuButton>)}
      </Menus>
      <NetTools>
        <ToolGroup>
          <Tool icon="wrench" size={17} />
          <Tool icon="tree" size={15} />
          <Tool icon="list" size={15} />
        </ToolGroup>
        <ToolGroup>
          <Tool icon="palette" size={15} />
          <Tool icon="params" size={15} />
        </ToolGroup>
        <ToolGroup>
          <Tool icon="netbox" size={15} />
          <Tool icon="note" size={16} />
          <Tool icon="image" size={17} />
          <Tool icon="crate" size={17} />
        </ToolGroup>
        <ToolGroup>
          <Tool icon="search" size={17} />
          <Tool icon="eye" size={16} />
        </ToolGroup>
      </NetTools>
    </NetBar>
    <Canvas>
      <Watermark $top={9} $right={252} $size={19}>Indie Edition</Watermark>
      <Watermark $top={13} $right={12} $size={23} $bold>Geometry</Watermark>
      <NodeSpot $x={115} $y={111}><NodeArt />circle2</NodeSpot>
      <NodeSpot $x={340} $y={111}><NodeArt selected />line5</NodeSpot>
      <Highlight />
    </Canvas>
  </Pane>
);

/* ---------- playbar ---------- */

const PlayBar = styled.footer`
  display: flex;
  background: #2f2f2f;
  border-top: 1px solid #6b6b6b;
  border-bottom: 1px solid #050505;
`;

const PlayCol = styled.div`
  display: flex;
  flex-direction: column;
  gap: 7px;
  padding: 7px 0 0 6px;
  width: 226px;
`;

const PlayRow = styled.div`
  display: flex;
  align-items: center;
  gap: ${(p) => p.$gap || 0}px;
`;

const TimeCol = styled.div`
  display: flex;
  flex: 1;
  flex-direction: column;
  gap: 7px;
  min-width: 0;
`;

const Ruler = styled.svg`
  width: 100%;
  height: 36px;
  overflow: visible;
`;

const RangeBar = styled.div`
  display: flex;
  flex: 1;
  align-items: center;
  hr {
    flex: 1;
    height: 3px;
    margin: 0;
    border: none;
    background: #757575;
  }
`;

const KeyCol = styled.div`
  display: flex;
  align-items: center;
  padding: 0 7px 3px 4px;
`;

const KeyButton = styled.button`
  display: flex;
  align-items: center;
  justify-content: center;
  width: 40px;
  height: 40px;
  border-radius: 20px;
  background: #343434;
  border: 1px solid #242424;
`;

const ChannelCol = styled.div`
  display: flex;
  flex-direction: column;
  gap: 5px;
  padding: 7px 6px 0 0;
`;

const ChannelButton = styled.button`
  display: flex;
  align-items: center;
  justify-content: space-between;
  width: 153px;
  height: 24px;
  padding: 0 5px 0 17px;
  background: linear-gradient(#525252, #3b3b3b);
  border: 1px solid #1d1d1d;
  border-top-color: #626262;
`;

const at = (frame) => `${((frame - 1) / 299.6) * 100}%`;

const Timeline = () => (
  <Ruler role="img" aria-label="Timeline">
    <line x1="0" x2="100%" y1="22.500" y2="22.500" stroke="#9d9d9d" />
    {steps(1, 50).map((i) => {
      const big = i % 4 === 0;
      return <line key={i} x1={at(i * 6)} x2={at(i * 6)} y1={big ? 15 : 18} y2={big ? 30 : 27} stroke="#9d9d9d" />;
    })}
    {steps(1, 12).map((i) => (
      <text key={i} x={at(i * 24)} y="10" fontSize="10" fill="#969696">{i * 24}</text>
    ))}
    <path d="M1 1.500 H24.500 V18.500 H5 L1 23Z" fill="#050505" stroke="#eee" strokeWidth="1.300" />
    <text x="12" y="15" textAnchor="middle" fontFamily="Liberation Mono" fontSize="13" fill="#f1f1f1">1</text>
  </Ruler>
);

const Playback = () => (
  <PlayBar>
    <Handle $end><Triangle dir="down" color="#000" size={6} /></Handle>
    <PlayCol>
      <PlayRow $gap={3}>
        <PlayRow>
          <Tool icon="first" label="First frame" w={27} h={28} raised />
          <Tool icon="prev" label="Play backward" w={27} h={28} size={16} raised />
          <Tool icon="stop" label="Stop" w={27} h={28} size={15} raised on />
          <Tool icon="play" label="Play" w={27} h={28} size={16} raised />
          <Tool icon="last" label="Last frame" w={27} h={28} raised />
        </PlayRow>
        <DarkInput aria-label="Current frame" defaultValue="1" $flex="none" $w={47} $h={28} />
        <PlayRow>
          <Tool icon="stepBack" label="Previous frame" w={14} h={28} size={9} raised />
          <Tool icon="stepFwd" label="Next frame" w={14} h={28} size={9} raised />
        </PlayRow>
      </PlayRow>
      <PlayRow $gap={4}>
        <PlayRow>
          <Tool icon="windowArrow" w={27} size={18} raised />
          <Tool icon="speaker" w={27} size={18} raised />
          <Tool icon="loop" w={27} size={18} raised corner="down" />
          <Tool icon="clock" w={27} size={18} raised />
          <Tool icon="bars" w={27} size={17} raised corner="right" />
          <Tool icon="keyline" w={27} size={16} raised />
        </PlayRow>
        <PlayRow>
          <Tool icon="keyPrev" label="Previous key" w={23} size={11} disabled />
          <Tool icon="keyNext" label="Next key" w={23} size={11} disabled />
        </PlayRow>
      </PlayRow>
    </PlayCol>
    <TimeCol>
      <Timeline />
      <PlayRow $gap={3}>
        <DarkInput aria-label="Global start" defaultValue="1" $flex="none" $w={42} />
        <DarkInput aria-label="Range start" defaultValue="1" $flex="none" $w={42} />
        <RangeBar>
          <Triangle dir="right" color="#c9c9c9" size={10} />
          <hr />
          <Triangle dir="left" color="#c9c9c9" size={10} />
        </RangeBar>
        <DarkInput aria-label="Range end" defaultValue="300" $flex="none" $w={42} />
        <DarkInput aria-label="Global end" defaultValue="300" $flex="none" $w={42} />
      </PlayRow>
    </TimeCol>
    <KeyCol>
      <KeyButton type="button" aria-label="Set key"><Icon name="key" size={18} /></KeyButton>
      <ToolButton type="button" aria-label="Key options" $w={15} $h={20} $raised><Triangle dir="down" size={7} /></ToolButton>
    </KeyCol>
    <ChannelCol>
      <PlayRow $gap={6}>
        <Tool icon="scopes" w={23} size={17} raised corner="right" />
        <ChannelButton type="button">0 keys, 0/0 channels<Triangle dir="up" /></ChannelButton>
      </PlayRow>
      <PlayRow $gap={6}>
        <Tool icon="waves" w={23} size={15} raised />
        <Select label="Key scope" value="Key All Channels" w={153} center />
      </PlayRow>
    </ChannelCol>
  </PlayBar>
);

const StatusBar = styled.div`
  display: flex;
  justify-content: flex-end;
  background: #181818;
`;

const StatusTools = styled.div`
  display: flex;
  align-items: center;
  gap: 3px;
  padding: 0 2px 0 0;
  background: #333;
`;

export default function App() {
  return (
    <Page>
      <GlobalStyle />
      <Gradients />
      <TopMenu />
      <Shelves>
        <Handle><Triangle dir="up" color="#000" size={6} /></Handle>
        <ShelfSet tabs={createTabs} tools={createTools} inset={0} />
        <ShelfGrip><Dots cols={2} rows={5} /></ShelfGrip>
        <ShelfSet tabs={lightTabs} tools={lightTools} inset={15} scroll />
      </Shelves>
      <Main>
        <VSplit>
          <Triangle dir="right" size={6} />
          <Dots cols={1} rows={6} color="#8a8a8a" />
          <Triangle dir="right" size={6} />
        </VSplit>
        <Column>
          <SceneView />
          <HSplit $h={7}>
            <Triangle dir="up" size={5} />
            <Dots cols={7} rows={2} color="#8a8a8a" />
            <Triangle dir="down" size={5} />
          </HSplit>
          <Spreadsheet />
        </Column>
        <VSplit>
          <Triangle dir="left" size={6} />
          <Dots cols={1} rows={6} color="#8a8a8a" />
          <Triangle dir="right" size={6} />
        </VSplit>
        <Column>
          <Parameters />
          <HSplit $h={6}>
            <Triangle dir="up" size={5} />
            <Dots cols={7} rows={2} color="#8a8a8a" />
            <Triangle dir="down" size={5} />
          </HSplit>
          <Network />
        </Column>
      </Main>
      <Playback />
      <StatusBar>
        <StatusTools>
          <Tool icon="brain" label="Memory" size={17} corner="right" />
          <Tool icon="refresh" label="Force update" size={16} />
          <Select label="Update mode" value="Auto Update" w={115} h={24} center />
        </StatusTools>
      </StatusBar>
    </Page>
  );
}
